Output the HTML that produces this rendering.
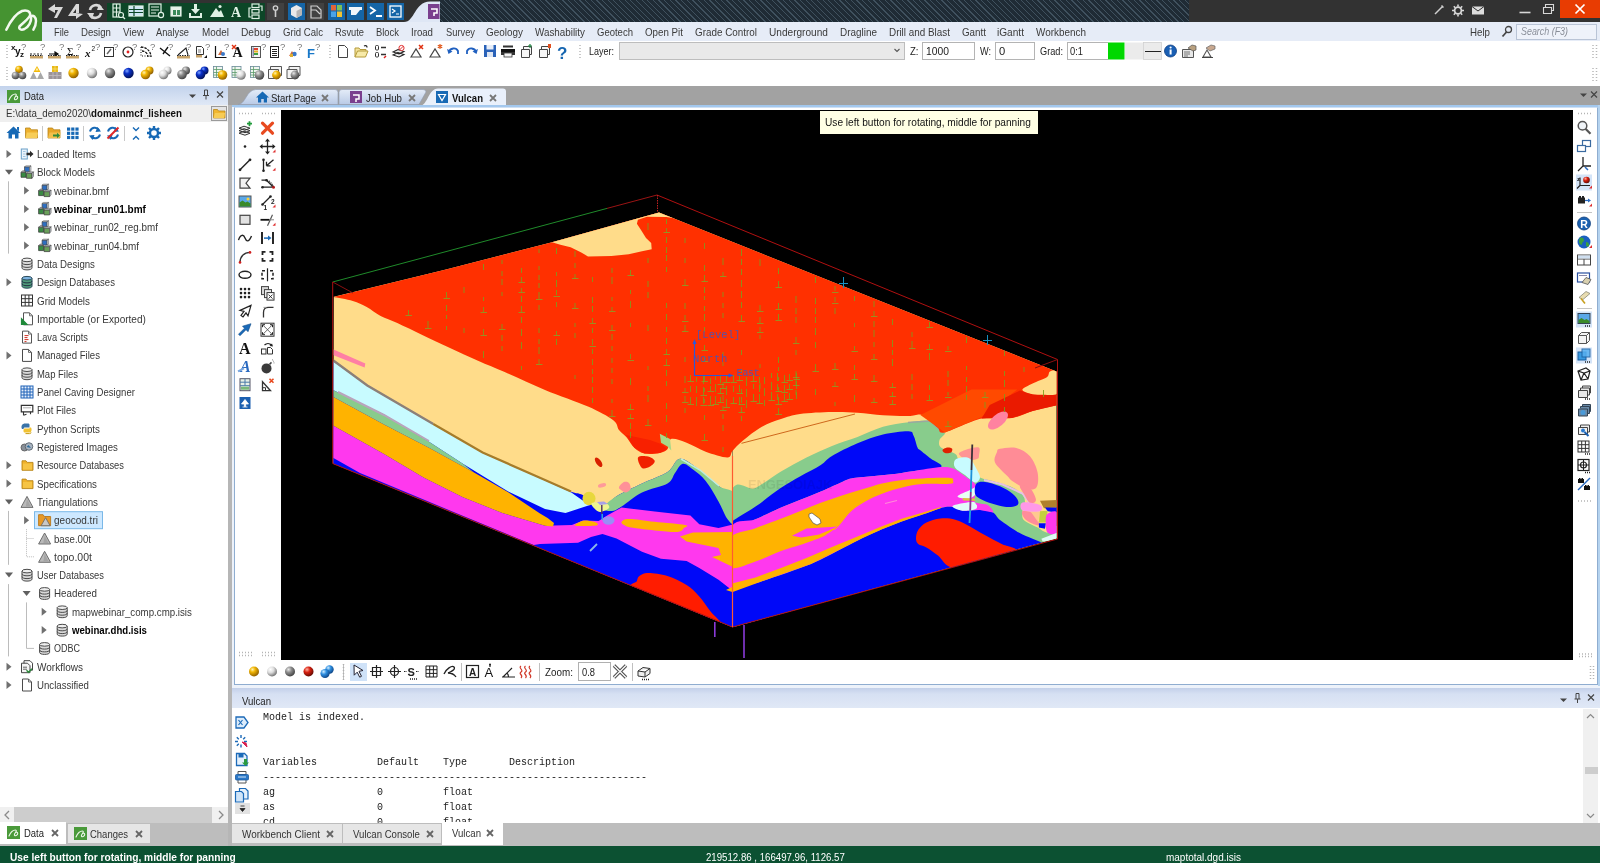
<!DOCTYPE html>
<html lang="en"><head><meta charset="utf-8"><title>Vulcan Workbench</title>
<style>
*{box-sizing:border-box;margin:0;padding:0}
html,body{width:1600px;height:863px;overflow:hidden;background:#fff}
body{position:relative;will-change:transform;font-family:"Liberation Sans",sans-serif;font-size:10.5px;letter-spacing:-0.3px;color:#222}
.a{position:absolute}
.t{position:absolute;white-space:nowrap;line-height:14px;height:14px;transform-origin:0 50%}
.b{font-weight:bold;color:#000;letter-spacing:-0.45px}
svg{position:absolute;overflow:visible}
#title{left:0;top:0;width:1600px;height:22px;background:#323232}
#hatch{left:439px;top:0;width:750px;height:22.500px;background:#1f2b35 repeating-linear-gradient(45deg,rgba(90,112,128,0) 0,rgba(90,112,128,0) 3.1px,rgba(90,112,128,.55) 3.1px,rgba(90,112,128,.55) 4px)}
#logo{left:0;top:0;width:42px;height:41px;background:#459331}
#menu{left:0;top:22px;width:1600px;height:19px;background:#e6ecf7}
#menu .t{top:3px;font-size:10.5px;color:#333}
#tb{left:0;top:41px;width:1600px;height:45px;background:#fff}
#dock{left:0;top:86px;width:1600px;height:762px;background:#a2a2a2}
#status{left:0;top:846px;width:1600px;height:17px;background:#0c5132;color:#fff}
#status .t{top:1px;color:#fff;font-size:10.5px}
.inp{position:absolute;top:42px;height:18px;border:1px solid #b4b4b4;background:#fff;font-size:10.5px;line-height:16px;padding-left:3px;color:#222}
</style></head><body>

<div class="a" id="title"></div><div class="a" id="hatch"></div>
<div class="a" id="menu"></div>
<div class="a" id="logo"></div>
<svg style="left:0;top:0" width="42" height="41" viewBox="0 0 42 41"><path d="M6.300 29.700C10 22 15 14 22 11C26 9.500 30 11 30.200 14.500C30 18 24 22 19.500 26.500C18.500 29 21 30.500 24.500 29C28.500 27 31.500 22 31.200 16.500C33 14.500 36 17 36 21C36 24.500 35 27 33.400 29.700" fill="none" stroke="#f2f9ee" stroke-width="2.500" stroke-linecap="round"/></svg>
<svg style="left:0;top:0" width="460" height="22" viewBox="0 0 460 22">
<g fill="#d8d8d8" stroke="none">
<path d="M48 9 L55 4 L55 7 L63 7 L57 18 L54 18 L58 10 L55 10 L55 13 Z"/>
<path d="M83 14 L76 19 L76 16 L68 16 L76 4 L79 4 L79 13 L76 13 L76 9 L73 13 L76 13 Z"/>
</g>
<g fill="none" stroke="#d8d8d8" stroke-width="2.6"><path d="M90 10 A6 6 0 0 1 101 8"/><path d="M101 13 A6 6 0 0 1 90 15"/></g>
<path d="M99 4 L104 10 L97 10Z M92 19 L87 13 L94 13Z" fill="#d8d8d8"/>
<rect x="107" y="3" width="158" height="18" fill="#0c4627"/>
<g fill="none" stroke="#dff0e4" stroke-width="1.2">
<rect x="113" y="4" width="7" height="13"/><path d="M116.500 4V17M113 8h7M113 12h7"/><circle cx="121" cy="15" r="2.5" fill="#0c4627"/><path d="M123 17l2 2"/>
<rect x="129" y="6" width="14" height="10" fill="#cfe6f5"/><path d="M129 9.500h14M129 12.500h14M134 6v10" stroke="#0c4627"/>
<rect x="149" y="4" width="12" height="12"/><path d="M151 7h8M151 10h8M151 13h5"/><circle cx="161" cy="15" r="2.600" fill="#0c4627"/>
<rect x="171" y="7" width="10" height="9" fill="#e8f2ea"/><rect x="173" y="10" width="3" height="5" fill="#3a8a5a" stroke="none"/><rect x="177" y="10" width="3" height="5" fill="#3a8a5a" stroke="none"/>
</g>
<path d="M194 4h3v5h3l-4.500 5l-4.500 -5h3z M189 13h2v3h9v-3h2v5h-13z" fill="#dff0e4"/>
<path d="M210 17l6-9l3 4l2-2l3 7z" fill="#dff0e4"/><circle cx="220" cy="6.500" r="1.600" fill="#dff0e4"/>
<text x="231" y="17" font-family="Liberation Serif,serif" font-weight="bold" font-size="14" fill="#dff0e4">A</text>
<g fill="none" stroke="#dff0e4" stroke-width="1.200"><rect x="252" y="4" width="7" height="3.500"/><rect x="252" y="9.500" width="7" height="3.500"/><rect x="252" y="15" width="7" height="3.500"/><path d="M251 8h-2v9h2M260 6h2v5"/></g>
<rect x="267" y="3" width="17" height="17" fill="#414141"/><circle cx="275.500" cy="8" r="2.200" fill="none" stroke="#d0d0d0" stroke-width="1.300"/><path d="M275.500 10v7" stroke="#d0d0d0" stroke-width="1.600"/>
<rect x="288" y="3" width="17" height="17" fill="#1565a6"/><path d="M291 8l5.500-3l5.500 3v7l-5.500 3l-5.500-3z" fill="#e9e9e9"/><path d="M296.500 11v7l5.500-3v-7z" fill="#b5b5b5"/>
<rect x="307" y="3" width="17" height="17" fill="#414141"/><path d="M311 6h6l4 4v8h-10z M311 10h5l4 4" fill="none" stroke="#cfcfcf" stroke-width="1.200"/>
<rect x="328" y="3" width="17" height="17" fill="#1565a6"/><rect x="331" y="5" width="5" height="5.500" fill="#e0653a"/><rect x="337" y="5" width="5" height="5.500" fill="#7cc15a"/><rect x="331" y="11.500" width="5" height="5.500" fill="#4aa3e8"/><rect x="337" y="11.500" width="5" height="5.500" fill="#f1c232"/>
<rect x="347" y="3" width="17" height="17" fill="#1565a6"/><path d="M349 7h13v3h-2l-4 5h-5v-5h-2z" fill="#f2f6fa"/>
<rect x="367" y="3" width="17" height="17" fill="#1565a6"/><path d="M370 7l5 3.500l-5 3.500M376 16h6" fill="none" stroke="#fff" stroke-width="1.800"/>
<rect x="387" y="3" width="17" height="17" fill="#1565a6"/><rect x="390" y="6" width="11" height="11" fill="none" stroke="#fff" stroke-width="1.300"/><path d="M392 9l3 2l-3 2M396 14h3" fill="none" stroke="#fff" stroke-width="1.200"/>
<path d="M404 22 C415 22 414 2 430 1.500 L440 1.500 L440 22 Z" fill="#dfe7f5"/><rect x="428" y="4" width="11.500" height="15" fill="#7a3f8e"/><path d="M431 9h6v4h-3v3" fill="none" stroke="#fff" stroke-width="1.600"/>
</svg>
<div class="a" style="left:1560px;top:0;width:40px;height:18px;background:#e83c02"></div>
<svg style="left:1430px;top:0" width="170" height="22" viewBox="1430 0 170 22"><g stroke="#fff" fill="none"><path d="M1575.500 4.500l9 9M1584.500 4.500l-9 9" stroke-width="1.700"/><path d="M1519.500 12.500h11" stroke="#d8d8d8" stroke-width="1.600"/><path d="M1543.500 7.500h8v6h-8zM1545.500 7v-2.500h8v6h-2" stroke="#d8d8d8" stroke-width="1.100"/><path d="M1435 14l8-8M1441.500 5.500l2 2" stroke="#cfcfcf" stroke-width="1.500"/><circle cx="1458" cy="10.500" r="3.400" stroke="#d8d8d8" stroke-width="1.800"/><path d="M1458 4.500v2M1458 14.500v2M1452 10.500h2M1462 10.500h2M1453.800 6.300l1.400 1.400M1460.800 13.300l1.400 1.400M1453.800 14.700l1.400-1.400M1460.800 7.700l1.400-1.400" stroke="#d8d8d8" stroke-width="1.600"/></g><rect x="1472" y="6.500" width="12" height="8" fill="#dcdcdc"/><path d="M1472 6.500l6 4.500l6-4.500" fill="none" stroke="#2c2c2c" stroke-width="1"/></svg>
<div class="t" style="left:54px;top:25px;font-size:11.2px;letter-spacing:0;transform:scaleX(0.8312);color:#3a3a3a;">File</div>
<div class="t" style="left:81px;top:25px;font-size:11.2px;letter-spacing:0;transform:scaleX(0.8605);color:#3a3a3a;">Design</div>
<div class="t" style="left:123px;top:25px;font-size:11.2px;letter-spacing:0;transform:scaleX(0.8723);color:#3a3a3a;">View</div>
<div class="t" style="left:156px;top:25px;font-size:11.2px;letter-spacing:0;transform:scaleX(0.8282);color:#3a3a3a;">Analyse</div>
<div class="t" style="left:202px;top:25px;font-size:11.2px;letter-spacing:0;transform:scaleX(0.8852);color:#3a3a3a;">Model</div>
<div class="t" style="left:241px;top:25px;font-size:11.2px;letter-spacing:0;transform:scaleX(0.9090);color:#3a3a3a;">Debug</div>
<div class="t" style="left:283px;top:25px;font-size:11.2px;letter-spacing:0;transform:scaleX(0.8570);color:#3a3a3a;">Grid Calc</div>
<div class="t" style="left:335px;top:25px;font-size:11.2px;letter-spacing:0;transform:scaleX(0.8320);color:#3a3a3a;">Rsvute</div>
<div class="t" style="left:376px;top:25px;font-size:11.2px;letter-spacing:0;transform:scaleX(0.8398);color:#3a3a3a;">Block</div>
<div class="t" style="left:411px;top:25px;font-size:11.2px;letter-spacing:0;transform:scaleX(0.8619);color:#3a3a3a;">Iroad</div>
<div class="t" style="left:446px;top:25px;font-size:11.2px;letter-spacing:0;transform:scaleX(0.8320);color:#3a3a3a;">Survey</div>
<div class="t" style="left:486px;top:25px;font-size:11.2px;letter-spacing:0;transform:scaleX(0.8870);color:#3a3a3a;">Geology</div>
<div class="t" style="left:535px;top:25px;font-size:11.2px;letter-spacing:0;transform:scaleX(0.8796);color:#3a3a3a;">Washability</div>
<div class="t" style="left:597px;top:25px;font-size:11.2px;letter-spacing:0;transform:scaleX(0.8503);color:#3a3a3a;">Geotech</div>
<div class="t" style="left:645px;top:25px;font-size:11.2px;letter-spacing:0;transform:scaleX(0.8720);color:#3a3a3a;">Open Pit</div>
<div class="t" style="left:695px;top:25px;font-size:11.2px;letter-spacing:0;transform:scaleX(0.8814);color:#3a3a3a;">Grade Control</div>
<div class="t" style="left:769px;top:25px;font-size:11.2px;letter-spacing:0;transform:scaleX(0.9025);color:#3a3a3a;">Underground</div>
<div class="t" style="left:840px;top:25px;font-size:11.2px;letter-spacing:0;transform:scaleX(0.8871);color:#3a3a3a;">Dragline</div>
<div class="t" style="left:889px;top:25px;font-size:11.2px;letter-spacing:0;transform:scaleX(0.8829);color:#3a3a3a;">Drill and Blast</div>
<div class="t" style="left:962px;top:25px;font-size:11.2px;letter-spacing:0;transform:scaleX(0.8762);color:#3a3a3a;">Gantt</div>
<div class="t" style="left:997px;top:25px;font-size:11.2px;letter-spacing:0;transform:scaleX(0.9036);color:#3a3a3a;">iGantt</div>
<div class="t" style="left:1036px;top:25px;font-size:11.2px;letter-spacing:0;transform:scaleX(0.8859);color:#3a3a3a;">Workbench</div>
<div class="t" style="left:1470px;top:25px;font-size:11.2px;letter-spacing:0;transform:scaleX(0.8683);color:#3a3a3a;">Help</div>
<div class="a" style="left:1516px;top:24px;width:81px;height:16px;border:1px solid #b9c4d6;background:#eef2fa"></div>
<div class="t" style="left:1521px;top:25px;font-size:10px;letter-spacing:0;transform:scaleX(0.8903);color:#8a8f99;font-style:italic;">Search (F3)</div>
<svg style="left:1500px;top:24px" width="14" height="16" viewBox="0 0 14 16"><circle cx="8.500" cy="5.500" r="3" fill="none" stroke="#444" stroke-width="1.300"/><path d="M6.500 8l-4 4.500" stroke="#444" stroke-width="1.800"/></svg>
<div class="a" id="tb"></div>
<svg style="left:0;top:0" width="1600" height="90" viewBox="0 0 1600 90">
<defs>
<radialGradient id="gGold" cx="35%" cy="30%" r="75%"><stop offset="0" stop-color="#fff2b0"/><stop offset=".35" stop-color="#f2b705"/><stop offset="1" stop-color="#8a5a00"/></radialGradient>
<radialGradient id="gWhite" cx="35%" cy="30%" r="75%"><stop offset="0" stop-color="#ffffff"/><stop offset=".45" stop-color="#dcdcdc"/><stop offset="1" stop-color="#6a6a6a"/></radialGradient>
<radialGradient id="gGray" cx="35%" cy="30%" r="75%"><stop offset="0" stop-color="#e8e8e8"/><stop offset=".4" stop-color="#8e8e8e"/><stop offset="1" stop-color="#3c3c3c"/></radialGradient>
<radialGradient id="gBlue" cx="35%" cy="30%" r="75%"><stop offset="0" stop-color="#7fa4ff"/><stop offset=".35" stop-color="#0a30c8"/><stop offset="1" stop-color="#02104e"/></radialGradient>
<radialGradient id="gRed" cx="35%" cy="30%" r="75%"><stop offset="0" stop-color="#ffb0a0"/><stop offset=".4" stop-color="#d82010"/><stop offset="1" stop-color="#5a0800"/></radialGradient>
<radialGradient id="gSky" cx="35%" cy="30%" r="75%"><stop offset="0" stop-color="#d0ecff"/><stop offset=".4" stop-color="#2f8fe0"/><stop offset="1" stop-color="#0a3f80"/></radialGradient>
</defs>
<path d="M7 45V58" stroke="#b8b8b8" stroke-width="1.500" stroke-dasharray="1 2"/>
<path d="M7 67V80" stroke="#b8b8b8" stroke-width="1.500" stroke-dasharray="1 2"/>
<path d="M330 45V58" stroke="#b8b8b8" stroke-width="1.500" stroke-dasharray="1 2"/>
<path d="M580 45V58" stroke="#b8b8b8" stroke-width="1.500" stroke-dasharray="1 2"/>
<path d="M1593 45V58" stroke="#b8b8b8" stroke-width="1.500" stroke-dasharray="1 2"/>
<path d="M1596.5 45V58" stroke="#b8b8b8" stroke-width="1.500" stroke-dasharray="1 2"/>
<path d="M1593 68V82" stroke="#b8b8b8" stroke-width="1.500" stroke-dasharray="1 2"/>
<path d="M1596.5 68V82" stroke="#b8b8b8" stroke-width="1.500" stroke-dasharray="1 2"/>
<text x="11" y="50" font-size="8" font-weight="bold" fill="#111" font-family="Liberation Sans,sans-serif">x</text><text x="15" y="55" font-size="10" font-weight="bold" fill="#111" font-family="Liberation Sans,sans-serif">y</text><text x="20" y="57" font-size="8" font-weight="bold" fill="#111" font-family="Liberation Sans,sans-serif">z</text><text x="21" y="50" font-size="9.500" fill="#7a7a7a" font-family="Liberation Sans,sans-serif">?</text>
<path d="M30 54h12" stroke="#222" stroke-width="1.200" stroke-dasharray="2 1.500"/><rect x="30" y="56" width="13" height="2.500" fill="#c8a46a"/><path d="M30 55.5h13" stroke="#222" stroke-width="1" stroke-dasharray="1.500 1"/><text x="40" y="50" font-size="9.500" fill="#7a7a7a" font-family="Liberation Sans,sans-serif">?</text>
<path d="M49 54h8M55 52l3 2l-3 2z" stroke="#111" stroke-width="1.200" fill="#111"/><rect x="48" y="56" width="13" height="2.500" fill="#c8a46a"/><path d="M48 55.5h13" stroke="#222" stroke-width="1" stroke-dasharray="1.500 1"/><text x="59" y="50" font-size="9.500" fill="#7a7a7a" font-family="Liberation Sans,sans-serif">?</text>
<text x="67" y="55" font-size="11" fill="#111" font-family="Liberation Serif,serif">Σ</text><rect x="66" y="56" width="13" height="2.500" fill="#c8a46a"/><path d="M66 55.5h13" stroke="#222" stroke-width="1" stroke-dasharray="1.500 1"/><text x="76" y="50" font-size="9.500" fill="#7a7a7a" font-family="Liberation Sans,sans-serif">?</text>
<text x="85" y="57" font-size="11" font-weight="bold" font-style="italic" fill="#111" font-family="Liberation Serif,serif">x</text><text x="91.500" y="51" font-size="6.500" fill="#111" font-family="Liberation Sans,sans-serif">2</text><text x="95" y="50" font-size="9.500" fill="#7a7a7a" font-family="Liberation Sans,sans-serif">?</text>
<rect x="104.500" y="47.500" width="9" height="9" fill="none" stroke="#333" stroke-width="1"/><path d="M107 54l4-5" stroke="#666" stroke-width="1.500"/><text x="113" y="50" font-size="9.500" fill="#7a7a7a" font-family="Liberation Sans,sans-serif">?</text>
<circle cx="128" cy="52" r="5" fill="none" stroke="#222" stroke-width="1.200"/><circle cx="128" cy="52" r="1.400" fill="#e02020"/><text x="132" y="50" font-size="9.500" fill="#7a7a7a" font-family="Liberation Sans,sans-serif">?</text>
<path d="M141 47 A10 10 0 0 1 151 57M142 51a6 6 0 0 1 6 6" fill="none" stroke="#111" stroke-width="1.300" stroke-dasharray="2.500 1"/><path d="M141 47v9h10" fill="none" stroke="#111" stroke-width="1" stroke-dasharray="1 1.500"/><text x="150" y="50" font-size="9.500" fill="#7a7a7a" font-family="Liberation Sans,sans-serif">?</text>
<path d="M160 48l10 8M168 47l-5 7" stroke="#111" stroke-width="1.300"/><text x="168" y="50" font-size="9.500" fill="#7a7a7a" font-family="Liberation Sans,sans-serif">?</text>
<path d="M178 55l8-7l2 7" fill="none" stroke="#222" stroke-width="1.100"/><rect x="177" y="56" width="13" height="2.500" fill="#c8a46a"/><path d="M177 55.5h13" stroke="#222" stroke-width="1" stroke-dasharray="1.500 1"/><text x="186" y="50" font-size="9.500" fill="#7a7a7a" font-family="Liberation Sans,sans-serif">?</text>
<path d="M196.500 46.500h5l2 2v6h-7z" fill="#fff" stroke="#333" stroke-width="1"/><path d="M198 50h3M198 52h3" stroke="#555" stroke-width=".8"/><rect x="196" y="55" width="6" height="2.500" fill="#c8a46a"/><path d="M204 58l3-3v3z" fill="#111"/><text x="205" y="50" font-size="9.500" fill="#7a7a7a" font-family="Liberation Sans,sans-serif">?</text>
<path d="M215.500 46v11.500h11" fill="none" stroke="#111" stroke-width="1.200"/><path d="M218 55l3-5l3 5z" fill="#d26a3a"/><circle cx="223" cy="54" r="2" fill="#3a78c8"/><text x="224" y="50" font-size="9.500" fill="#7a7a7a" font-family="Liberation Sans,sans-serif">?</text>
<text x="232.500" y="57" font-size="14" font-weight="bold" fill="#111" font-family="Liberation Serif,serif">A</text><path d="M232 45l4 4M236 45l-4 4" stroke="#e03010" stroke-width="1.400"/>
<rect x="251.500" y="46.500" width="9" height="11" fill="#f4f4f4" stroke="#555" stroke-width="1"/><rect x="254" y="48" width="4" height="2" fill="#e04030"/><rect x="254" y="50.500" width="4" height="2" fill="#e8b020"/><rect x="254" y="53" width="4" height="2" fill="#40a040"/><rect x="252.500" y="47.500" width="1.500" height="9" fill="#88a"/><text x="261" y="50" font-size="9.500" fill="#7a7a7a" font-family="Liberation Sans,sans-serif">?</text>
<rect x="270.500" y="46.500" width="8" height="11" fill="#fff" stroke="#222" stroke-width="1"/><path d="M272 49.500h5M272 51.500h5M272 53.500h5M272 55.500h5" stroke="#222" stroke-width="1"/><text x="280" y="50" font-size="9.500" fill="#7a7a7a" font-family="Liberation Sans,sans-serif">?</text>
<path d="M289 56l3-5l3 5z" fill="#d26a3a"/><circle cx="294.500" cy="54" r="2.200" fill="#3a78c8"/><rect x="290" y="54" width="3" height="3" fill="#e0b030"/><text x="297" y="50" font-size="9.500" fill="#7a7a7a" font-family="Liberation Sans,sans-serif">?</text>
<text x="307" y="58" font-size="13" font-weight="bold" fill="#1878c8" font-family="Liberation Sans,sans-serif">F</text><text x="315" y="50" font-size="9.500" fill="#7a7a7a" font-family="Liberation Sans,sans-serif">?</text>
<path d="M338.500 45.500h6l3 3v9h-9z" fill="#fff" stroke="#444" stroke-width="1"/>
<path d="M355 57v-9h4l1 1.500h6v2" fill="#f4e39a" stroke="#b49a3a" stroke-width="1"/><path d="M355 57l2.500-6h10.500l-2.500 6z" fill="#f7eaa8" stroke="#b49a3a" stroke-width="1"/><path d="M364 46c2-1 3 0 3 1.500" fill="none" stroke="#222" stroke-width="1.200"/>
<rect x="375.500" y="45.500" width="3" height="4.500" rx="1" fill="none" stroke="#333"/><rect x="375.500" y="52.500" width="3" height="4.500" rx="1" fill="none" stroke="#333"/><path d="M381 47.500h5M381 54.500h5" stroke="#333" stroke-width="1.300"/><path d="M384 58l2-2" stroke="#e02020" stroke-width="1.500"/>
<path d="M393 52l5-2.500l6 2l-5 2.500zM393 55l5-2.500l6 2l-5 2.500z" fill="#eee" stroke="#222" stroke-width="1.100"/><circle cx="401.500" cy="48" r="2.600" fill="#fff" stroke="#e03030" stroke-width="1"/><path d="M399.700 49.800l3.600-3.600" stroke="#e03030"/>
<path d="M411 57l5-8l5 8z" fill="none" stroke="#444" stroke-width="1.200"/><path d="M419 45l4 4M423 45l-4 4" stroke="#e03010" stroke-width="1.500"/>
<path d="M430 57l5-8l5 8z" fill="none" stroke="#444" stroke-width="1.200"/><path d="M440 44v5M437.800 45.200l4.400 2.600M437.800 47.800l4.400-2.600" stroke="#e05010" stroke-width="1.100"/>
<path d="M449 52c1-4 7-5 9-1v3" fill="none" stroke="#2060c0" stroke-width="1.800"/><path d="M447 49l1.500 5l4-2.500z" fill="#2060c0"/>
<path d="M476 52c-1-4-7-5-9-1v3" fill="none" stroke="#2060c0" stroke-width="1.800"/><path d="M478 49l-1.500 5l-4-2.500z" fill="#2060c0"/>
<rect x="484" y="45" width="12" height="12" fill="#2a62b8"/><rect x="486.500" y="45" width="7" height="4.500" fill="#e8eef8"/><rect x="487" y="52" width="6" height="5" fill="#dfe6f2"/>
<path d="M503 47.500h10v-2h-10zM501 49h14v6h-14z" fill="#333"/><rect x="504" y="53" width="8" height="4" fill="#f4f4f4" stroke="#333" stroke-width=".8"/><rect x="501" y="49" width="14" height="3" fill="#111"/>
<path d="M521.500 49.500h8v8h-8zM523.500 49v-2.500h8v8h-2" fill="#f6f6f6" stroke="#444" stroke-width="1"/><path d="M530 44v4M528 46h4" stroke="#208040" stroke-width="1.200"/>
<path d="M539.500 49.500h8v8h-8zM541.500 49v-2.500h8v8h-2" fill="#f6f6f6" stroke="#444" stroke-width="1"/><rect x="548" y="44" width="3" height="4" fill="#e05020"/>
<text x="557" y="58.500" font-size="17" font-weight="bold" fill="#1565b0" font-family="Liberation Sans,sans-serif">?</text>
<rect x="619.500" y="42.500" width="285" height="17" fill="#e9e9e9" stroke="#bdbdbd"/><path d="M894.500 49l2.500 2.500l2.500-2.500" fill="none" stroke="#555" stroke-width="1.100"/>
<rect x="1107" y="42.500" width="17.500" height="17" fill="#00d800"/><rect x="1125" y="42.500" width="18" height="17" fill="#ebebeb"/><rect x="1143.500" y="42.500" width="18" height="17" fill="#ebebeb" stroke="#d0d0d0" stroke-width=".8"/><path d="M1145 51.500h16" stroke="#222" stroke-width="1"/>
<circle cx="1170.500" cy="51" r="6" fill="#1a5fb4"/><circle cx="1170.500" cy="51" r="6" fill="none" stroke="#0c3c80" stroke-width=".8"/><rect x="1169.600" y="49.500" width="2" height="5" fill="#fff"/><circle cx="1170.600" cy="47.500" r="1.100" fill="#fff"/>
<path d="M1182.500 49.500h11v8h-11z" fill="#e8e8e8" stroke="#555" stroke-width="1"/><path d="M1184 52h6M1184 54h6M1184 56h4" stroke="#555" stroke-width=".8"/><path d="M1188 48l4-3l4 1v4l-3 1z" fill="#b8a080" stroke="#555" stroke-width=".7"/>
<path d="M1203 57l4-7l4 7z" fill="none" stroke="#555" stroke-width="1.100"/><path d="M1206 48l5-3l4 1v3l-5 2z" fill="#c8a890" stroke="#666" stroke-width=".7"/><path d="M1202 57.500h11" stroke="#444" stroke-width="1"/>
<circle cx="19" cy="69.5" r="3.8" fill="url(#gGold)"/><circle cx="15.5" cy="75.5" r="3.8" fill="url(#gGray)"/><circle cx="22.5" cy="75.5" r="3.8" fill="url(#gGray)"/>
<path d="M37 66l3.500 6h-7z" fill="#f2b705"/><path d="M33.500 72l3.500 7h-7zM40.500 72l3.500 7h-7z" fill="#a8a8a8"/><path d="M37 67.500l1.500 3h-3z" fill="#fff2b0"/>
<rect x="52" y="66" width="6" height="6" fill="#e8b818"/><path d="M52 69h6M55 66v6" stroke="#f8e070" stroke-width=".8"/><rect x="48.500" y="72" width="13" height="7" fill="#9a9498"/><path d="M48.500 75.500h13M53 72v7M57 72v7" stroke="#c4bcc0" stroke-width=".8"/>
<circle cx="73.5" cy="73" r="5.2" fill="url(#gGold)"/>
<circle cx="92" cy="73" r="5.2" fill="url(#gWhite)"/>
<circle cx="110" cy="73" r="5.2" fill="url(#gGray)"/>
<circle cx="128.5" cy="73" r="5.2" fill="url(#gBlue)"/>
<circle cx="149.5" cy="70.5" r="4" fill="url(#gGold)"/><circle cx="145.5" cy="74.5" r="4.8" fill="url(#gGold)"/>
<circle cx="167.5" cy="70.5" r="4" fill="url(#gWhite)"/><circle cx="163.5" cy="74.5" r="4.8" fill="url(#gWhite)"/>
<circle cx="186.0" cy="70.5" r="4" fill="url(#gGray)"/><circle cx="182.0" cy="74.5" r="4.8" fill="url(#gGray)"/>
<circle cx="204.5" cy="70.5" r="4" fill="url(#gBlue)"/><circle cx="200.5" cy="74.5" r="4.8" fill="url(#gBlue)"/>
<rect x="213.5" y="66.500" width="9" height="11" fill="#f0f6f0" stroke="#6a8a9a" stroke-width=".8"/><path d="M213.5 69.500h9M213.5 72.500h9M213.5 75h9M216.5 66.500v11" stroke="#5a9a6a" stroke-width=".8"/><circle cx="222.5" cy="75" r="4.8" fill="url(#gGold)"/>
<rect x="232.0" y="66.500" width="9" height="11" fill="#f0f6f0" stroke="#6a8a9a" stroke-width=".8"/><path d="M232.0 69.500h9M232.0 72.500h9M232.0 75h9M235.0 66.500v11" stroke="#5a9a6a" stroke-width=".8"/><circle cx="241" cy="75" r="4.8" fill="url(#gWhite)"/>
<rect x="250.5" y="66.500" width="9" height="11" fill="#f0f6f0" stroke="#6a8a9a" stroke-width=".8"/><path d="M250.5 69.500h9M250.5 72.500h9M250.5 75h9M253.5 66.500v11" stroke="#5a9a6a" stroke-width=".8"/><circle cx="259.5" cy="75" r="4.8" fill="url(#gGray)"/>
<path d="M268.5 69.500h10v9h-10zM270.5 69v-2.500h11v9h-3" fill="#f4f4f4" stroke="#555" stroke-width="1"/><circle cx="276.5" cy="75" r="4.4" fill="url(#gGold)"/>
<path d="M287.0 69.500h10v9h-10zM289.0 69v-2.500h11v9h-3" fill="#f4f4f4" stroke="#555" stroke-width="1"/><circle cx="295" cy="75" r="4.4" fill="url(#gGray)"/>
</svg>
<div class="inp" style="left:922px;width:53px">&nbsp;</div><div class="inp" style="left:995px;width:40px">&nbsp;</div><div class="inp" style="left:1066.500px;width:41px;border-right:none">&nbsp;</div>
<div class="t" style="left:589px;top:44px;font-size:11.2px;letter-spacing:0;transform:scaleX(0.8032);color:#222;">Layer:</div>
<div class="t" style="left:910px;top:44px;font-size:11.2px;letter-spacing:0;transform:scaleX(0.8541);color:#222;">Z:</div>
<div class="t" style="left:926px;top:44px;font-size:11.2px;letter-spacing:0;transform:scaleX(0.9232);color:#222;">1000</div>
<div class="t" style="left:980px;top:44px;font-size:11.2px;letter-spacing:0;transform:scaleX(0.8160);color:#222;">W:</div>
<div class="t" style="left:999px;top:44px;font-size:11.2px;color:#222;">0</div>
<div class="t" style="left:1040px;top:44px;font-size:11.2px;letter-spacing:0;transform:scaleX(0.8212);color:#222;">Grad:</div>
<div class="t" style="left:1070px;top:44px;font-size:11.2px;letter-spacing:0;transform:scaleX(0.8350);color:#222;">0:1</div>
<div class="a" id="dock"></div><div class="a" style="left:0;top:823px;width:1600px;height:23px;background:#bdbdbd"></div>
<div class="a" style="left:0;top:86px;width:228px;height:19px;background:linear-gradient(#c3d3ec,#dfe8f6)"></div>
<div class="a" style="left:0;top:105px;width:228px;height:17px;background:#efefef"></div>
<div class="a" style="left:0;top:122px;width:228px;height:685px;background:#fff"></div>
<div class="a" style="left:0;top:807px;width:228px;height:16px;background:#f0f0f0"></div><div class="a" style="left:14px;top:807px;width:198px;height:16px;background:#cdcdcd"></div>
<svg style="left:0;top:807px" width="228" height="16"><path d="M9 4l-4 4l4 4M219 4l4 4l-4 4" fill="none" stroke="#8a8a8a" stroke-width="1.300"/></svg>
<svg style="left:7px;top:90px" width="13" height="13" viewBox="0 0 13 13"><rect width="13" height="13" fill="#4a9a3a"/><path d="M2 10c1.500-3.500 4-6 6.500-6c1.200 0 .8 1.500 0 2.500c-1 1.300-1.500 2.500-.8 3c1 .6 3-.4 3-2c0-1.300-1.500-1.600-2.400-.8" fill="none" stroke="#f0f8ec" stroke-width="1.100" stroke-linecap="round"/></svg>
<div class="t" style="left:24px;top:89px;font-size:11.2px;letter-spacing:0;transform:scaleX(0.8454);color:#222;">Data</div>
<svg style="left:185px;top:88px" width="44" height="14" viewBox="185 88 44 14"><path d="M189 94.500h7l-3.500 3.500z" fill="#444"/><path d="M204.500 90v5.500M207.500 90v5.500M204.500 90h3M203 95.500h6M206 95.500v4" fill="none" stroke="#444" stroke-width="1"/><path d="M217 91.500l6 6M223 91.500l-6 6" stroke="#444" stroke-width="1.200"/></svg>
<div class="t" style="left:6px;top:106px;font-size:11.2px;letter-spacing:0;transform:scaleX(0.8695);color:#333;">E:\data_demo2020\</div>
<div class="t" style="left:91px;top:106px;font-size:11.2px;letter-spacing:0;transform:scaleX(0.8704);font-weight:bold;color:#111;">domainmcf_lisheen</div>
<div class="a" style="left:211px;top:106px;width:16px;height:15px;border:1px solid #9a9a9a;background:#e4e4e4"></div><svg style="left:213px;top:108px" width="13" height="11"><path d="M.5 10V1.500h4l1 1.500h6.500v7z" fill="#f0b630" stroke="#b8861a" stroke-width=".8"/><path d="M.5 10l1.500-5h10l-1 5z" fill="#f7cc55"/></svg>
<svg style="left:0;top:122px" width="228" height="22" viewBox="0 122 228 22">
<path d="M6.500 133l7-6.500l7 6.500h-2v5.500h-3.500v-4h-3v4h-3.500v-5.500z" fill="#1769b5"/><path d="M17 127v2.500l2 1.800v-4.300z" fill="#1769b5"/>
<path d="M25.500 138v-10h4.500l1.200 1.800h6.300v8.200z" fill="#eeb12e" stroke="#b9851a" stroke-width=".8"/><path d="M25.500 138l1.500-5.500h11l-1 5.500z" fill="#f7cd58"/>
<path d="M42.500 126v15M83.500 126v15M124.500 126v15" stroke="#c8c8c8" stroke-width="1"/>
<path d="M48 138v-10h4.500l1.200 1.800h6.300v8.200z" fill="#e8a628" stroke="#b9851a" stroke-width=".8"/><path d="M48 138l1.500-5.500h11l-1 5.500z" fill="#f3c04a"/><path d="M53 134.500h4v-1.800l3 2.800l-3 2.800v-1.800h-4z" fill="#2e8a3a"/>
<rect x="67.0" y="127.5" width="3.200" height="3.200" fill="#1769b5"/>
<rect x="67.0" y="131.7" width="3.200" height="3.200" fill="#1769b5"/>
<rect x="67.0" y="135.9" width="3.200" height="3.200" fill="#1769b5"/>
<rect x="71.2" y="127.5" width="3.200" height="3.200" fill="#1769b5"/>
<rect x="71.2" y="131.7" width="3.200" height="3.200" fill="#1769b5"/>
<rect x="71.2" y="135.9" width="3.200" height="3.200" fill="#1769b5"/>
<rect x="75.4" y="127.5" width="3.200" height="3.200" fill="#1769b5"/>
<rect x="75.4" y="131.7" width="3.200" height="3.200" fill="#1769b5"/>
<rect x="75.4" y="135.9" width="3.200" height="3.200" fill="#1769b5"/>
<g fill="none" stroke="#1769b5" stroke-width="2"><path d="M90 131.500a5 5 0 0 1 9-1.500M100 134.500a5 5 0 0 1-9 1.500"/></g><path d="M97.500 127l3.500 4.500l-5.500.5zM92.500 140l-3.500-4.500l5.500-.5z" fill="#1769b5"/>
<g fill="none" stroke="#1769b5" stroke-width="2"><path d="M108 131.500a5 5 0 0 1 9-1.500M118 134.500a5 5 0 0 1-9 1.500"/></g><path d="M115.500 127l3.500 4.500l-5.500.5zM110.500 140l-3.500-4.500l5.500-.5z" fill="#1769b5"/><path d="M107.500 138.500l11-11" stroke="#e02828" stroke-width="2"/>
<path d="M133 127.500l3 3l3-3M133 139.500l3-3l3 3" fill="none" stroke="#1769b5" stroke-width="1.400"/>
<circle cx="154" cy="133" r="4" fill="none" stroke="#1769b5" stroke-width="2.400"/><g stroke="#1769b5" stroke-width="2.400"><path d="M154 126v2.500M154 137.500v2.500M147 133h2.500M158.500 133h2.500M149 128l1.800 1.800M157.200 136.200l1.800 1.800M149 138l1.800-1.800M157.200 129.800l1.800-1.800"/></g>
</svg>
<div class="a" style="left:0;top:822px;width:66px;height:22px;background:#fff"></div>
<div class="a" style="left:68px;top:824px;width:82px;height:19px;background:#e6e6e6"></div>
<svg style="left:7px;top:826px" width="13" height="13" viewBox="0 0 13 13"><rect width="13" height="13" fill="#4a9a3a"/><path d="M2 10c1.500-3.500 4-6 6.500-6c1.200 0 .8 1.500 0 2.500c-1 1.300-1.500 2.500-.8 3c1 .6 3-.4 3-2c0-1.300-1.500-1.600-2.400-.8" fill="none" stroke="#f0f8ec" stroke-width="1.100" stroke-linecap="round"/></svg>
<div class="t" style="left:24px;top:826px;font-size:11.2px;letter-spacing:0;transform:scaleX(0.8454);color:#222;">Data</div>
<svg style="left:74px;top:827px" width="13" height="13" viewBox="0 0 13 13"><rect width="13" height="13" fill="#4a9a3a"/><path d="M2 10c1.500-3.500 4-6 6.500-6c1.200 0 .8 1.500 0 2.500c-1 1.300-1.500 2.500-.8 3c1 .6 3-.4 3-2c0-1.300-1.500-1.600-2.400-.8" fill="none" stroke="#f0f8ec" stroke-width="1.100" stroke-linecap="round"/></svg>
<div class="t" style="left:90px;top:827px;font-size:11.2px;letter-spacing:0;transform:scaleX(0.8477);color:#333;">Changes</div>
<svg style="left:51px;top:829px" width="8" height="8"><path d="M1 1l6 6M7 1l-6 6" stroke="#666" stroke-width="1.800"/></svg>
<svg style="left:135px;top:830px" width="8" height="8"><path d="M1 1l6 6M7 1l-6 6" stroke="#666" stroke-width="1.800"/></svg>
<svg style="left:230px;top:86px" width="290" height="22" viewBox="230 86 290 22"><defs><linearGradient id="tg" x1="0" y1="0" x2="0" y2="1"><stop offset="0" stop-color="#e4ecf8"/><stop offset="1" stop-color="#b9cae6"/></linearGradient></defs><path d="M238 104.500C246 104 246 90 256 89.500L335 89.500Q338 89.500 338 92.500L338 104.500Z" fill="url(#tg)" stroke="#8e9bb0" stroke-width=".6"/><path d="M339 104.500L339 92.500Q339 89.500 342 89.500L423 89.500Q426 89.500 426 92L419 104.500Z" fill="url(#tg)" stroke="#8e9bb0" stroke-width=".6"/><path d="M420 106C428 105 428 89 438 88.500L503 88.500Q506 88.500 506 91.500L506 106Z" fill="#e9f0fb"/><path d="M256 97.500l6.500-6l6.500 6h-2v5h-3.200v-3.500h-2.600v3.500h-3.200v-5z" fill="#1769b5"/><rect x="350" y="91" width="12" height="12" fill="#7a3f8e"/><path d="M353 95h6v4h-3v3" fill="none" stroke="#fff" stroke-width="1.500"/><rect x="436" y="91" width="12" height="12" fill="#1769b5"/><path d="M438.500 94.500h7l-3.500 6z" fill="none" stroke="#fff" stroke-width="1.200"/></svg>
<div class="t" style="left:271px;top:91px;font-size:11.2px;letter-spacing:0;transform:scaleX(0.8504);color:#222;">Start Page</div>
<svg style="left:321px;top:94px" width="8" height="8"><path d="M1 1l6 6M7 1l-6 6" stroke="#777" stroke-width="1.800"/></svg>
<div class="t" style="left:366px;top:91px;font-size:11.2px;letter-spacing:0;transform:scaleX(0.8630);color:#222;">Job Hub</div>
<svg style="left:408px;top:94px" width="8" height="8"><path d="M1 1l6 6M7 1l-6 6" stroke="#777" stroke-width="1.800"/></svg>
<div class="t" style="left:452px;top:91px;font-size:11.2px;letter-spacing:0;transform:scaleX(0.8539);font-weight:bold;color:#111;">Vulcan</div>
<svg style="left:489px;top:94px" width="8" height="8"><path d="M1 1l6 6M7 1l-6 6" stroke="#777" stroke-width="1.800"/></svg>
<svg style="left:1577px;top:88px" width="24" height="14" viewBox="1575 88 24 14"><path d="M1578 93.500h7l-3.500 3.500z" fill="#444"/><path d="M1589 91.500l6 6M1595 91.500l-6 6" stroke="#444" stroke-width="1.200"/></svg>
<div class="a" style="left:232px;top:105px;width:1368px;height:583px;background:#edf2fa"></div><div class="a" style="left:232px;top:105px;width:1368px;height:2px;background:#a3c8ee"></div><div class="a" style="left:1598px;top:105px;width:2px;height:581px;background:#b5d3ef"></div><div class="a" style="left:234px;top:107px;width:1364px;height:578px;background:#fff;border:1px solid #8fadd0;border-top:1px solid #cfe0f4"></div>
<div class="a" style="left:228px;top:105px;width:4px;height:741px;background:#b6b6b6"></div>
<div class="a" id="vp" style="left:281px;top:110px;width:1292px;height:550px;background:#000"></div>
<div class="a" style="left:232px;top:688px;width:1368px;height:20px;background:linear-gradient(#c3d0e9,#d6e0f3 30%,#e0e8f6)"></div>
<div class="a" style="left:232px;top:708px;width:1368px;height:115px;background:#fff"></div>
<div class="t" style="left:242px;top:694px;font-size:11.2px;letter-spacing:0;transform:scaleX(0.8572);color:#222;">Vulcan</div>
<svg style="left:1556px;top:692px" width="44" height="14" viewBox="1556 692 44 14"><path d="M1560 698.500h7l-3.500 3.500z" fill="#444"/><path d="M1576 693.500v5.500M1579 693.500v5.500M1576 693.500h3M1574.500 699h6M1577.500 699v4" fill="none" stroke="#444" stroke-width="1"/><path d="M1588 694.500l6 6M1594 694.500l-6 6" stroke="#444" stroke-width="1.200"/></svg>
<div class="a" style="left:1583px;top:709px;width:15px;height:114px;background:#f0f0f0"></div><div class="a" style="left:1585px;top:767px;width:13px;height:7px;background:#cdcdcd"></div>
<svg style="left:1583px;top:709px" width="15" height="114"><path d="M4 9l3.500-3.500l3.500 3.500M4 105l3.500 3.500l3.500-3.500" fill="none" stroke="#8a8a8a" stroke-width="1.200"/></svg>
<svg style="left:232px;top:709px" width="24" height="114" viewBox="232 709 24 114"><path d="M236 717h8l4 5.500l-4 5.500h-8z" fill="#dcecfb" stroke="#1c6ab8" stroke-width="1.300"/><path d="M238.500 720l4 5M242.500 720l-4 5" stroke="#1c6ab8" stroke-width="1.200"/><g stroke="#1c6ab8" stroke-width="1.400"><path d="M241 735v3M241 744.500v3M235 741.500h3M244 741.500h3M236.800 737.300l2 2M236.800 745.700l2-2M245.200 737.300l-2 2"/></g><path d="M242 742l5 5l-1-4z" fill="#d82050" stroke="#d82050" stroke-width="1"/><path d="M236.500 753.500h8l2.500 2.500v9.500h-10.500z" fill="#e4f0fb" stroke="#1c6ab8" stroke-width="1.300"/><rect x="238.500" y="754" width="5" height="3.500" fill="#1c6ab8"/><path d="M244 759v3.500h-2l3.500 3.500l3.500-3.500h-2v-3.500z" fill="#2a9a40"/><path d="M238 771.500h8v3h-8zM238 780v3h8v-3" fill="#fff" stroke="#555" stroke-width="1"/><rect x="235.500" y="774.500" width="13" height="5.500" rx="1" fill="#2a78c8" stroke="#1c5aa0" stroke-width=".8"/><path d="M238 777h8" stroke="#cfe4f8" stroke-width="1"/><path d="M239.500 788.500h6l2.500 2.500v8h-8.500z" fill="#e4f0fb" stroke="#1c6ab8" stroke-width="1.200"/><path d="M235.500 791.500h6l2 2v8.500h-8z" fill="#cfe4f8" stroke="#1c6ab8" stroke-width="1.200"/><rect x="235" y="803" width="15" height="11" fill="#e2e2e2"/><path d="M240.500 806h4M240 808.500h5l-2.500 3z" fill="#222" stroke="#222" stroke-width=".8"/></svg>
<div class="t" style="left:263px;top:711px;font-size:10px;color:#222;font-family:'Liberation Mono',monospace;letter-spacing:0;white-space:pre;">Model is indexed.</div>
<div class="t" style="left:263px;top:756px;font-size:10px;color:#222;font-family:'Liberation Mono',monospace;letter-spacing:0;white-space:pre;">Variables          Default    Type       Description</div>
<div class="t" style="left:263px;top:771px;font-size:10px;color:#222;font-family:'Liberation Mono',monospace;letter-spacing:0;white-space:pre;">----------------------------------------------------------------</div>
<div class="t" style="left:263px;top:786px;font-size:10px;color:#222;font-family:'Liberation Mono',monospace;letter-spacing:0;white-space:pre;">ag                 0          float</div>
<div class="t" style="left:263px;top:801px;font-size:10px;color:#222;font-family:'Liberation Mono',monospace;letter-spacing:0;white-space:pre;">as                 0          float</div>
<div class="a" style="left:263px;top:816px;height:7px;overflow:hidden;width:400px"><div class="t" style="left:0;top:0;font-size:10px;color:#222;font-family:'Liberation Mono',monospace;letter-spacing:0;white-space:pre;">cd                 0          float</div></div>
<div class="a" style="left:232px;top:824px;width:110px;height:19px;background:#e6e6e6"></div>
<div class="a" style="left:343px;top:824px;width:98px;height:19px;background:#e6e6e6"></div>
<div class="a" style="left:442px;top:822px;width:61px;height:23px;background:#fff"></div>
<div class="t" style="left:242px;top:827px;font-size:11.2px;letter-spacing:0;transform:scaleX(0.8845);color:#333;">Workbench Client</div>
<svg style="left:326px;top:830px" width="8" height="8"><path d="M1 1l6 6M7 1l-6 6" stroke="#666" stroke-width="1.800"/></svg>
<div class="t" style="left:353px;top:827px;font-size:11.2px;letter-spacing:0;transform:scaleX(0.8586);color:#333;">Vulcan Console</div>
<svg style="left:426px;top:830px" width="8" height="8"><path d="M1 1l6 6M7 1l-6 6" stroke="#666" stroke-width="1.800"/></svg>
<div class="t" style="left:452px;top:826px;font-size:11.2px;letter-spacing:0;transform:scaleX(0.8572);color:#333;">Vulcan</div>
<svg style="left:486px;top:829px" width="8" height="8"><path d="M1 1l6 6M7 1l-6 6" stroke="#666" stroke-width="1.800"/></svg>
<div class="a" id="status"></div>
<div class="t" style="left:10px;top:850px;font-size:11.2px;letter-spacing:0;transform:scaleX(0.9104);font-weight:bold;color:#fff;">Use left button for rotating, middle for panning</div>
<div class="t" style="left:706px;top:850px;font-size:11.2px;letter-spacing:0;transform:scaleX(0.8629);color:#fff;">219512.86 , 166497.96, 1126.57</div>
<div class="t" style="left:1166px;top:850px;font-size:11.2px;letter-spacing:0;transform:scaleX(0.8924);color:#fff;">maptotal.dgd.isis</div>
<div class="a" style="left:820px;top:110.500px;width:218px;height:23px;background:#ffffe4"></div>
<div class="t" style="left:825px;top:114.5px;font-size:11.2px;letter-spacing:0;transform:scaleX(0.9066);color:#111;">Use left button for rotating, middle for panning</div>
<svg style="left:0;top:143px" width="228" height="664" viewBox="0 143 228 664">
<rect x="34.500" y="511.7" width="68" height="17" fill="#cde8ff" stroke="#7ab8e8" stroke-width="1"/>
<path d="M8.500 181.3V253.6" stroke="#bcbcbc" stroke-width="1"/>
<path d="M8.500 510.9V564.8" stroke="#bcbcbc" stroke-width="1"/>
<path d="M8.500 584.1V656.4" stroke="#bcbcbc" stroke-width="1"/>
<path d="M26.500 602.4V648.4H34" stroke="#bcbcbc" stroke-width="1" fill="none"/>
<path d="M26.500 529.2V556.8H34M26.500 538.5H34" stroke="#bcbcbc" stroke-width="1" fill="none" stroke-dasharray="1 1"/>
<path d="M6.5 150.0l5 4l-5 4z" fill="#707070"/>
<g transform="translate(20.5 147.5)"><rect x=".8" y="1.500" width="6" height="10" fill="#eaf3fb" stroke="#6aa0c8" stroke-width="1"/><path d="M2.500 4h2.500M2.500 6.500h2.500M2.500 9h2.500" stroke="#8fb8d8" stroke-width=".8"/><path d="M6 5.300h3.500v-2l3.500 3.200l-3.500 3.200v-2h-3.500z" fill="#2b2b2b"/></g>
<path d="M5.0 169.8h8l-4 5z" fill="#606060"/>
<g transform="translate(20.5 165.8)"><path d="M4 1h5v5h-5z" fill="#2f6fc0" stroke="#444" stroke-width=".7"/><path d="M4 1l1.500-1h5l-1.500 1zM9 1l1.500-1v5l-1.500 1z" fill="#cfd4da" stroke="#555" stroke-width=".5"/><path d="M.5 6.500h5v5h-5z" fill="#3a8a44" stroke="#333" stroke-width=".7"/><path d="M6 7.500h5.500v5h-5.500z" fill="#6aa05a" stroke="#333" stroke-width=".7"/><path d="M6 7.500l1.500-1.500h5.500l-1.500 1.500zM11.500 7.500l1.500-1.500v4.500l-1.500 2z" fill="#b9bec4" stroke="#444" stroke-width=".5"/><path d="M.5 6.500l1.500-1.500h3l-1 1.500z" fill="#aaa" stroke="#444" stroke-width=".5"/></g>
<path d="M24.1 186.6l5 4l-5 4z" fill="#707070"/>
<g transform="translate(38.1 184.1)"><path d="M4 1h5v5h-5z" fill="#2f6fc0" stroke="#444" stroke-width=".7"/><path d="M4 1l1.500-1h5l-1.500 1zM9 1l1.500-1v5l-1.500 1z" fill="#cfd4da" stroke="#555" stroke-width=".5"/><path d="M.5 6.500h5v5h-5z" fill="#3a8a44" stroke="#333" stroke-width=".7"/><path d="M6 7.500h5.500v5h-5.500z" fill="#6aa05a" stroke="#333" stroke-width=".7"/><path d="M6 7.500l1.500-1.500h5.500l-1.500 1.500zM11.500 7.500l1.500-1.500v4.500l-1.500 2z" fill="#b9bec4" stroke="#444" stroke-width=".5"/><path d="M.5 6.500l1.500-1.500h3l-1 1.500z" fill="#aaa" stroke="#444" stroke-width=".5"/></g>
<path d="M24.1 204.9l5 4l-5 4z" fill="#707070"/>
<g transform="translate(38.1 202.4)"><path d="M4 1h5v5h-5z" fill="#2f6fc0" stroke="#444" stroke-width=".7"/><path d="M4 1l1.500-1h5l-1.500 1zM9 1l1.500-1v5l-1.500 1z" fill="#cfd4da" stroke="#555" stroke-width=".5"/><path d="M.5 6.500h5v5h-5z" fill="#3a8a44" stroke="#333" stroke-width=".7"/><path d="M6 7.500h5.500v5h-5.500z" fill="#6aa05a" stroke="#333" stroke-width=".7"/><path d="M6 7.500l1.500-1.500h5.500l-1.500 1.500zM11.500 7.500l1.500-1.500v4.500l-1.500 2z" fill="#b9bec4" stroke="#444" stroke-width=".5"/><path d="M.5 6.500l1.500-1.500h3l-1 1.500z" fill="#aaa" stroke="#444" stroke-width=".5"/></g>
<path d="M24.1 223.2l5 4l-5 4z" fill="#707070"/>
<g transform="translate(38.1 220.7)"><path d="M4 1h5v5h-5z" fill="#2f6fc0" stroke="#444" stroke-width=".7"/><path d="M4 1l1.500-1h5l-1.500 1zM9 1l1.500-1v5l-1.500 1z" fill="#cfd4da" stroke="#555" stroke-width=".5"/><path d="M.5 6.500h5v5h-5z" fill="#3a8a44" stroke="#333" stroke-width=".7"/><path d="M6 7.500h5.500v5h-5.500z" fill="#6aa05a" stroke="#333" stroke-width=".7"/><path d="M6 7.500l1.500-1.500h5.500l-1.500 1.500zM11.500 7.500l1.500-1.500v4.500l-1.500 2z" fill="#b9bec4" stroke="#444" stroke-width=".5"/><path d="M.5 6.500l1.500-1.500h3l-1 1.500z" fill="#aaa" stroke="#444" stroke-width=".5"/></g>
<path d="M24.1 241.6l5 4l-5 4z" fill="#707070"/>
<g transform="translate(38.1 239.1)"><path d="M4 1h5v5h-5z" fill="#2f6fc0" stroke="#444" stroke-width=".7"/><path d="M4 1l1.500-1h5l-1.500 1zM9 1l1.500-1v5l-1.500 1z" fill="#cfd4da" stroke="#555" stroke-width=".5"/><path d="M.5 6.500h5v5h-5z" fill="#3a8a44" stroke="#333" stroke-width=".7"/><path d="M6 7.500h5.500v5h-5.500z" fill="#6aa05a" stroke="#333" stroke-width=".7"/><path d="M6 7.500l1.500-1.500h5.500l-1.500 1.500zM11.500 7.500l1.500-1.500v4.500l-1.500 2z" fill="#b9bec4" stroke="#444" stroke-width=".5"/><path d="M.5 6.500l1.500-1.500h3l-1 1.500z" fill="#aaa" stroke="#444" stroke-width=".5"/></g>
<g transform="translate(20.5 257.4)"><path d="M1.500 2.500v8c0 1.200 2 2 5 2s5-.8 5-2v-8" fill="#d9d9d9" stroke="#4a4a4a" stroke-width="1"/><ellipse cx="6.500" cy="2.500" rx="5" ry="1.800" fill="#efefef" stroke="#4a4a4a" stroke-width="1"/><path d="M1.500 5.200c0 1.200 2 2 5 2s5-.8 5-2M1.500 8c0 1.200 2 2 5 2s5-.8 5-2" fill="none" stroke="#4a4a4a" stroke-width="1"/></g>
<path d="M6.5 278.2l5 4l-5 4z" fill="#707070"/>
<g transform="translate(20.5 275.7)"><path d="M1.500 2.500v8c0 1.200 2 2 5 2s5-.8 5-2v-8" fill="#4f9a7a" stroke="#2a4a5a" stroke-width="1"/><ellipse cx="6.500" cy="2.500" rx="5" ry="1.800" fill="#7db4e0" stroke="#2a4a5a" stroke-width="1"/><path d="M1.500 5.200c0 1.200 2 2 5 2s5-.8 5-2M1.500 8c0 1.200 2 2 5 2s5-.8 5-2" fill="none" stroke="#234" stroke-width="1"/></g>
<g transform="translate(20.5 294.0)"><rect x="1" y="1" width="11" height="11" fill="#fff" stroke="#333" stroke-width="1"/><path d="M1 4.700h11M1 8.400h11M4.700 1v11M8.400 1v11" stroke="#333" stroke-width="1"/></g>
<g transform="translate(20.5 312.3)"><path d="M3 .5h6l3 3v9h-9z" fill="#fff" stroke="#555" stroke-width="1"/><path d="M9 .5v3h3" fill="none" stroke="#555" stroke-width=".8"/><path d="M1 6.500v5.500h5.500zM1.500 7l4 4" fill="#1f8a3a" stroke="#1f8a3a" stroke-width="1.200"/></g>
<g transform="translate(20.5 330.6)"><path d="M2 .5h6l3 3v9h-9z" fill="#fff" stroke="#555" stroke-width="1"/><path d="M8 .5v3h3" fill="none" stroke="#555" stroke-width=".8"/><path d="M4 5h4M4 7h3M4 9h4M4 11h2" stroke="#d03020" stroke-width="1"/></g>
<path d="M6.5 351.4l5 4l-5 4z" fill="#707070"/>
<g transform="translate(20.5 348.9)"><path d="M2 .5h6l3 3v9h-9z" fill="#fff" stroke="#4a4a4a" stroke-width="1"/><path d="M8 .5v3h3" fill="none" stroke="#4a4a4a" stroke-width=".8"/></g>
<g transform="translate(20.5 367.2)"><path d="M1.500 2.500v8c0 1.200 2 2 5 2s5-.8 5-2v-8" fill="#d9d9d9" stroke="#4a4a4a" stroke-width="1"/><ellipse cx="6.500" cy="2.500" rx="5" ry="1.800" fill="#efefef" stroke="#4a4a4a" stroke-width="1"/><path d="M1.500 5.200c0 1.200 2 2 5 2s5-.8 5-2M1.500 8c0 1.200 2 2 5 2s5-.8 5-2" fill="none" stroke="#4a4a4a" stroke-width="1"/></g>
<g transform="translate(20.5 385.5)"><rect x=".5" y=".5" width="12" height="12" fill="#e8f0fb" stroke="#1e63b8" stroke-width="1"/><path d="M.5 3.500h12M.5 6.500h12M.5 9.500h12M3.500 .5v12M6.500 .5v12M9.500 .5v12" stroke="#1e63b8" stroke-width="1"/></g>
<g transform="translate(20.5 403.8)"><path d="M.8 1.500h11.500v6.500h-11.500z" fill="#fff" stroke="#333" stroke-width="1.200"/><path d="M3 8v3.500M10 8v2.500M3 11.500l3-1" stroke="#333" stroke-width="1.100" fill="none"/><path d="M2.500 4h8" stroke="#999" stroke-width=".8"/></g>
<g transform="translate(20.5 422.1)"><path d="M3 1.500h4.500c1 0 1.500.5 1.500 1.500v2.500h-4.500c-1 0-1.500.7-1.500 1.500h-1.500c-.7-1-.7-3 0-4c.3-.5.8-1 2-1z" fill="#3a73a8"/><path d="M10.500 5.500c.8 1 .8 3.200 0 4.200c-.3.500-.8.800-2 .8h-4c-1 0-1.500-.5-1.500-1.500v-1c0-.8.500-1.500 1.500-1.500h4.500v-1z" fill="#f1c232"/><path d="M5 11.500h4c1 0 1.500-.4 1.500-1.200" fill="none" stroke="#c89a10" stroke-width="1"/></g>
<g transform="translate(20.5 440.5)"><circle cx="4" cy="7" r="3.500" fill="#8a9098" stroke="#555" stroke-width=".8"/><circle cx="8.500" cy="6" r="3.800" fill="#aab4c0" stroke="#4a5560" stroke-width=".8"/><path d="M6 6.500l2-2l2.500 3z" fill="#2a6a9a"/></g>
<path d="M6.5 461.3l5 4l-5 4z" fill="#707070"/>
<g transform="translate(20.5 458.8)"><path d="M1.500 11.500V2h4l1.200 1.600h5.800v7.900z" fill="#f0b22c" stroke="#b8861a" stroke-width=".9"/><rect x="2.500" y="4.800" width="9" height="6" fill="#f6c445"/></g>
<path d="M6.5 479.6l5 4l-5 4z" fill="#707070"/>
<g transform="translate(20.5 477.1)"><path d="M1.500 11.500V2h4l1.200 1.600h5.800v7.900z" fill="#f0b22c" stroke="#b8861a" stroke-width=".9"/><rect x="2.500" y="4.800" width="9" height="6" fill="#f6c445"/></g>
<path d="M5.0 499.4h8l-4 5z" fill="#606060"/>
<g transform="translate(20.5 495.4)"><path d="M6.500 1l6 11h-12z" fill="#b9b9b9" stroke="#6e6e6e" stroke-width="1"/><path d="M6.500 3.500l3.800 7.500h-5z" fill="#a4a4a4"/></g>
<path d="M24.1 516.2l5 4l-5 4z" fill="#707070"/>
<g transform="translate(38.1 513.7)"><path d="M.5 12V1h4.500l1.200 1.800h6.300v9.200z" fill="#e89a28" stroke="#b8761a" stroke-width=".9"/><path d="M7.500 4l4.500 8h-9z" fill="#c8c8c8" stroke="#666" stroke-width=".8"/></g>
<g transform="translate(38.1 532.0)"><path d="M6.500 1l6 11h-12z" fill="#b9b9b9" stroke="#6e6e6e" stroke-width="1"/><path d="M6.500 3.500l3.800 7.500h-5z" fill="#a4a4a4"/></g>
<g transform="translate(38.1 550.3)"><path d="M6.500 1l6 11h-12z" fill="#b9b9b9" stroke="#6e6e6e" stroke-width="1"/><path d="M6.500 3.500l3.800 7.500h-5z" fill="#a4a4a4"/></g>
<path d="M5.0 572.6h8l-4 5z" fill="#606060"/>
<g transform="translate(20.5 568.6)"><path d="M1.500 2.500v8c0 1.200 2 2 5 2s5-.8 5-2v-8" fill="#d9d9d9" stroke="#4a4a4a" stroke-width="1"/><ellipse cx="6.500" cy="2.500" rx="5" ry="1.800" fill="#efefef" stroke="#4a4a4a" stroke-width="1"/><path d="M1.500 5.200c0 1.200 2 2 5 2s5-.8 5-2M1.500 8c0 1.200 2 2 5 2s5-.8 5-2" fill="none" stroke="#4a4a4a" stroke-width="1"/></g>
<path d="M22.6 590.9h8l-4 5z" fill="#606060"/>
<g transform="translate(38.1 586.9)"><path d="M1.500 2.500v8c0 1.200 2 2 5 2s5-.8 5-2v-8" fill="#d9d9d9" stroke="#4a4a4a" stroke-width="1"/><ellipse cx="6.500" cy="2.500" rx="5" ry="1.800" fill="#efefef" stroke="#4a4a4a" stroke-width="1"/><path d="M1.500 5.200c0 1.200 2 2 5 2s5-.8 5-2M1.500 8c0 1.200 2 2 5 2s5-.8 5-2" fill="none" stroke="#4a4a4a" stroke-width="1"/></g>
<path d="M41.7 607.8l5 4l-5 4z" fill="#707070"/>
<g transform="translate(55.7 605.2)"><path d="M1.500 2.500v8c0 1.200 2 2 5 2s5-.8 5-2v-8" fill="#d9d9d9" stroke="#4a4a4a" stroke-width="1"/><ellipse cx="6.500" cy="2.500" rx="5" ry="1.800" fill="#efefef" stroke="#4a4a4a" stroke-width="1"/><path d="M1.500 5.200c0 1.200 2 2 5 2s5-.8 5-2M1.500 8c0 1.200 2 2 5 2s5-.8 5-2" fill="none" stroke="#4a4a4a" stroke-width="1"/></g>
<path d="M41.7 626.1l5 4l-5 4z" fill="#707070"/>
<g transform="translate(55.7 623.6)"><path d="M1.500 2.500v8c0 1.200 2 2 5 2s5-.8 5-2v-8" fill="#d9d9d9" stroke="#4a4a4a" stroke-width="1"/><ellipse cx="6.500" cy="2.500" rx="5" ry="1.800" fill="#efefef" stroke="#4a4a4a" stroke-width="1"/><path d="M1.500 5.200c0 1.200 2 2 5 2s5-.8 5-2M1.500 8c0 1.200 2 2 5 2s5-.8 5-2" fill="none" stroke="#4a4a4a" stroke-width="1"/></g>
<g transform="translate(38.1 641.9)"><path d="M1.500 2.500v8c0 1.200 2 2 5 2s5-.8 5-2v-8" fill="#d9d9d9" stroke="#4a4a4a" stroke-width="1"/><ellipse cx="6.500" cy="2.500" rx="5" ry="1.800" fill="#efefef" stroke="#4a4a4a" stroke-width="1"/><path d="M1.500 5.200c0 1.200 2 2 5 2s5-.8 5-2M1.500 8c0 1.200 2 2 5 2s5-.8 5-2" fill="none" stroke="#4a4a4a" stroke-width="1"/></g>
<path d="M6.5 662.7l5 4l-5 4z" fill="#707070"/>
<g transform="translate(20.5 660.2)"><path d="M3.500 .5h6l2.500 2.500v7h-8.500z" fill="#fff" stroke="#444" stroke-width="1"/><path d="M1 3h6l2.500 2.500v7h-8.500z" fill="#f4f4f4" stroke="#444" stroke-width="1"/><path d="M2.500 7h4M2.500 9h4" stroke="#555" stroke-width=".9"/><path d="M6 10l2 2l3.500-3.500" stroke="#2a8a3a" stroke-width="1.400" fill="none"/></g>
<path d="M6.5 681.0l5 4l-5 4z" fill="#707070"/>
<g transform="translate(20.5 678.5)"><path d="M2 .5h6l3 3v9h-9z" fill="#fff" stroke="#4a4a4a" stroke-width="1"/><path d="M8 .5v3h3" fill="none" stroke="#4a4a4a" stroke-width=".8"/></g>
</svg>
<div class="t" style="left:37px;top:147.0px;font-size:11.2px;letter-spacing:0;transform:scaleX(0.8694);color:#383838;">Loaded Items</div>
<div class="t" style="left:37px;top:165.3px;font-size:11.2px;letter-spacing:0;transform:scaleX(0.8709);color:#383838;">Block Models</div>
<div class="t" style="left:54px;top:183.6px;font-size:11.2px;letter-spacing:0;transform:scaleX(0.9109);color:#383838;">webinar.bmf</div>
<div class="t" style="left:54px;top:201.9px;font-size:11.2px;letter-spacing:0;transform:scaleX(0.8959);font-weight:bold;color:#000;">webinar_run01.bmf</div>
<div class="t" style="left:54px;top:220.2px;font-size:11.2px;letter-spacing:0;transform:scaleX(0.8792);color:#383838;">webinar_run02_reg.bmf</div>
<div class="t" style="left:54px;top:238.6px;font-size:11.2px;letter-spacing:0;transform:scaleX(0.8866);color:#383838;">webinar_run04.bmf</div>
<div class="t" style="left:37px;top:256.9px;font-size:11.2px;letter-spacing:0;transform:scaleX(0.8627);color:#383838;">Data Designs</div>
<div class="t" style="left:37px;top:275.2px;font-size:11.2px;letter-spacing:0;transform:scaleX(0.8523);color:#383838;">Design Databases</div>
<div class="t" style="left:37px;top:293.5px;font-size:11.2px;letter-spacing:0;transform:scaleX(0.8779);color:#383838;">Grid Models</div>
<div class="t" style="left:37px;top:311.8px;font-size:11.2px;letter-spacing:0;transform:scaleX(0.8980);color:#383838;">Importable (or Exported)</div>
<div class="t" style="left:37px;top:330.1px;font-size:11.2px;letter-spacing:0;transform:scaleX(0.8276);color:#383838;">Lava Scripts</div>
<div class="t" style="left:37px;top:348.4px;font-size:11.2px;letter-spacing:0;transform:scaleX(0.8577);color:#383838;">Managed Files</div>
<div class="t" style="left:37px;top:366.7px;font-size:11.2px;letter-spacing:0;transform:scaleX(0.8446);color:#383838;">Map Files</div>
<div class="t" style="left:37px;top:385.0px;font-size:11.2px;letter-spacing:0;transform:scaleX(0.8555);color:#383838;">Panel Caving Designer</div>
<div class="t" style="left:37px;top:403.3px;font-size:11.2px;letter-spacing:0;transform:scaleX(0.8468);color:#383838;">Plot Files</div>
<div class="t" style="left:37px;top:421.6px;font-size:11.2px;letter-spacing:0;transform:scaleX(0.8725);color:#383838;">Python Scripts</div>
<div class="t" style="left:37px;top:440.0px;font-size:11.2px;letter-spacing:0;transform:scaleX(0.8617);color:#383838;">Registered Images</div>
<div class="t" style="left:37px;top:458.3px;font-size:11.2px;letter-spacing:0;transform:scaleX(0.8319);color:#383838;">Resource Databases</div>
<div class="t" style="left:37px;top:476.6px;font-size:11.2px;letter-spacing:0;transform:scaleX(0.8683);color:#383838;">Specifications</div>
<div class="t" style="left:37px;top:494.9px;font-size:11.2px;letter-spacing:0;transform:scaleX(0.8723);color:#383838;">Triangulations</div>
<div class="t" style="left:54px;top:513.2px;font-size:11.2px;letter-spacing:0;transform:scaleX(0.8946);color:#383838;">geocod.tri</div>
<div class="t" style="left:54px;top:531.5px;font-size:11.2px;letter-spacing:0;transform:scaleX(0.8612);color:#383838;">base.00t</div>
<div class="t" style="left:54px;top:549.8px;font-size:11.2px;letter-spacing:0;transform:scaleX(0.9388);color:#383838;">topo.00t</div>
<div class="t" style="left:37px;top:568.1px;font-size:11.2px;letter-spacing:0;transform:scaleX(0.8344);color:#383838;">User Databases</div>
<div class="t" style="left:54px;top:586.4px;font-size:11.2px;letter-spacing:0;transform:scaleX(0.8742);color:#383838;">Headered</div>
<div class="t" style="left:72px;top:604.8px;font-size:11.2px;letter-spacing:0;transform:scaleX(0.8685);color:#383838;">mapwebinar_comp.cmp.isis</div>
<div class="t" style="left:72px;top:623.1px;font-size:11.2px;letter-spacing:0;transform:scaleX(0.8608);font-weight:bold;color:#000;">webinar.dhd.isis</div>
<div class="t" style="left:54px;top:641.4px;font-size:11.2px;letter-spacing:0;transform:scaleX(0.8035);color:#383838;">ODBC</div>
<div class="t" style="left:37px;top:659.7px;font-size:11.2px;letter-spacing:0;transform:scaleX(0.8942);color:#383838;">Workflows</div>
<div class="t" style="left:37px;top:678.0px;font-size:11.2px;letter-spacing:0;transform:scaleX(0.8612);color:#383838;">Unclassified</div>
<svg style="left:232px;top:106px" width="50" height="560" viewBox="232 106 50 560">
<path d="M239 113.5H252" stroke="#b4b4b4" stroke-width="1.500" stroke-dasharray="1 2"/>
<path d="M262 113.5H275" stroke="#b4b4b4" stroke-width="1.500" stroke-dasharray="1 2"/>
<path d="M239 655.5H252" stroke="#b4b4b4" stroke-width="1.500" stroke-dasharray="1 2"/><path d="M239 652.5H252" stroke="#b4b4b4" stroke-width="1.500" stroke-dasharray="1 2"/>
<path d="M262 655.5H275" stroke="#b4b4b4" stroke-width="1.500" stroke-dasharray="1 2"/><path d="M262 652.5H275" stroke="#b4b4b4" stroke-width="1.500" stroke-dasharray="1 2"/>
<g transform="translate(237.0 120.2)"><path d="M2 8l5-2l6 2l-5 2zM2 10.500l5-2l6 2l-5 2zM2 13l5-2l6 2l-5 2z" fill="#f4f4f4" stroke="#333" stroke-width="1"/><path d="M12.500 1v5M10 3.500h5" stroke="#1f9a3a" stroke-width="1.800"/></g>
<g transform="translate(237.0 138.5)"><circle cx="8" cy="8" r="1.300" fill="#222"/></g>
<g transform="translate(237.0 156.8)"><path d="M3 13L13 3" stroke="#222" stroke-width="1.400"/><circle cx="3" cy="13" r="1.400" fill="#222"/><circle cx="13" cy="3" r="1.400" fill="#222"/></g>
<g transform="translate(237.0 175.2)"><path d="M3 3h10l-4 5l4 5h-10z" fill="#f2f2f2" stroke="#444" stroke-width="1.200"/></g>
<g transform="translate(237.0 193.5)"><rect x="2" y="2.500" width="12" height="11" fill="#5aa8e8" stroke="#555" stroke-width="1"/><path d="M2.500 13v-4l3-2l3 2l2-1l3 2v3z" fill="#3a8a2a"/><circle cx="11" cy="5.500" r="1.500" fill="#f8d040"/></g>
<g transform="translate(237.0 211.8)"><rect x="3" y="3.500" width="10" height="9" fill="#e2e2e2" stroke="#444" stroke-width="1.200"/></g>
<g transform="translate(237.0 230.1)"><path d="M1.500 10c2-6 5-6 6.500-2s4 4 6.500-2" fill="none" stroke="#222" stroke-width="1.400"/></g>
<g transform="translate(237.0 248.4)"><path d="M3 14c0-6 4-10 10-10" fill="none" stroke="#333" stroke-width="1.400"/><circle cx="3" cy="14" r="1.300" fill="#d02020"/><circle cx="13" cy="4" r="1.300" fill="#d02020"/></g>
<g transform="translate(237.0 266.8)"><ellipse cx="8" cy="8" rx="6" ry="3.500" fill="none" stroke="#222" stroke-width="1.400"/></g>
<g transform="translate(237.0 285.1)"><circle cx="4" cy="4" r="1.300" fill="#222"/><circle cx="4" cy="8" r="1.300" fill="#222"/><circle cx="4" cy="12" r="1.300" fill="#222"/><circle cx="8" cy="4" r="1.300" fill="#222"/><circle cx="8" cy="8" r="1.300" fill="#222"/><circle cx="8" cy="12" r="1.300" fill="#222"/><circle cx="12" cy="4" r="1.300" fill="#222"/><circle cx="12" cy="8" r="1.300" fill="#222"/><circle cx="12" cy="12" r="1.300" fill="#222"/></g>
<g transform="translate(237.0 303.4)"><path d="M14 2l-11 5l4 1l-3 4l2 1.500l3-4l2 3z" fill="#fff" stroke="#222" stroke-width="1.200"/></g>
<g transform="translate(237.0 321.7)"><path d="M14 2l-3 8l-2-2l-6 6l-1.500-1.500l6-6l-2-2z" fill="#1a6ab8" stroke="#0e4a88" stroke-width=".6"/></g>
<g transform="translate(237.0 340.0)"><text x="2" y="14" font-family="Liberation Serif,serif" font-weight="bold" font-size="16" fill="#111">A</text></g>
<g transform="translate(237.0 358.4)"><text x="3" y="14" font-family="Liberation Serif,serif" font-weight="bold" font-style="italic" font-size="16" fill="#2a6ac0">A</text><path d="M1 13l6-3" stroke="#7aa8e0" stroke-width="2"/></g>
<g transform="translate(237.0 376.7)"><rect x="3" y="2" width="10" height="12" fill="#e6f0e8" stroke="#556" stroke-width="1"/><path d="M3 5.500h10M3 9h10M8 2v7" stroke="#4a7aa8" stroke-width="1"/><rect x="4" y="10" width="8" height="3" fill="#7ab87a"/></g>
<g transform="translate(237.0 395.0)"><rect x="2.500" y="2" width="11" height="12" fill="#1a5fb0"/><path d="M8 4.500l3.500 4.500h-2.200v0h-2.600h-2.200zM7.300 9h1.400v2.500h-1.400zM5.500 12h5" fill="#fff" stroke="#fff" stroke-width=".8"/></g>
<g transform="translate(259.5 120.2)"><path d="M3 3l10 10M13 3L3 13" stroke="#e84a20" stroke-width="3.200" stroke-linecap="round"/></g>
<g transform="translate(259.5 138.5)"><path d="M8 1.500v13M1.500 8h13" stroke="#222" stroke-width="1.300"/><path d="M8 0l2.500 3h-5zM8 16l2.500-3h-5zM0 8l3-2.500v5zM16 8l-3-2.500v5z" fill="#222"/><path d="M13 14l3 0l0-3z" fill="#e03030"/></g>
<g transform="translate(259.5 156.8)"><path d="M4 3v11" stroke="#222" stroke-width="1.300"/><circle cx="4" cy="3" r="1.300" fill="#222"/><circle cx="4" cy="14" r="1.300" fill="#222"/><path d="M14 3l-7 6M7 9v-4M7 9h4" stroke="#222" stroke-width="1.300" fill="none"/><path d="M13 14l3 0l0-3z" fill="#e03030"/></g>
<g transform="translate(259.5 175.2)"><path d="M2 5h5l7 7h-11" fill="none" stroke="#222" stroke-width="1.300"/><circle cx="7" cy="5" r="1.300" fill="#222"/><circle cx="14" cy="12" r="1.500" fill="#c02020"/><circle cx="3" cy="12" r="1.300" fill="#222"/><path d="M7 5c3 0 6 3 7 7" fill="none" stroke="#222" stroke-width="1" stroke-dasharray="1.500 1"/></g>
<g transform="translate(259.5 193.5)"><path d="M3 11l8-8" stroke="#222" stroke-width="1.300"/><circle cx="3" cy="11" r="1.300" fill="#222"/><circle cx="11" cy="3" r="1.300" fill="#222"/><text x="4" y="16.500" font-size="6.500" font-weight="bold" font-family="Liberation Sans,sans-serif" fill="#222">1</text><text x="11.500" y="10" font-size="6.500" font-weight="bold" font-family="Liberation Sans,sans-serif" fill="#222">2</text><path d="M13 14l3 0l0-3z" fill="#e03030"/></g>
<g transform="translate(259.5 211.8)"><path d="M1 8h9" stroke="#111" stroke-width="1.800"/><path d="M13 3l-5 11" stroke="#555" stroke-width="1.200"/><path d="M10.500 8h4" stroke="#888" stroke-width="1"/><path d="M13 14l3 0l0-3z" fill="#e03030"/></g>
<g transform="translate(259.5 230.1)"><path d="M2.500 2v12M13.500 2v12" stroke="#111" stroke-width="1.800"/><path d="M4.500 8h5" stroke="#1a6ab8" stroke-width="1.500"/><path d="M12 8l-3.500-2.500v5z" fill="#1a6ab8"/></g>
<g transform="translate(259.5 248.4)"><path d="M6 3.500h-3v3M3 9.500v3h3M10 3.500h3v3M13 9.500v3h-3" fill="none" stroke="#222" stroke-width="1.800"/></g>
<g transform="translate(259.5 266.8)"><path d="M8 1.500v13" stroke="#222" stroke-width="1.200"/><path d="M5.500 4h-3v8h3M10.500 4h3v8h-3" fill="none" stroke="#222" stroke-width="1.500" stroke-dasharray="3 2"/></g>
<g transform="translate(259.5 285.1)"><rect x="2" y="1.500" width="7" height="8" fill="#d8d8d8" stroke="#444" stroke-width="1"/><rect x="5" y="4.500" width="7" height="8" fill="#ececec" stroke="#444" stroke-width="1"/><rect x="7.500" y="7.500" width="7" height="7.500" fill="#fff" stroke="#333" stroke-width="1"/><path d="M9 9.500l4 4M13 9.500l-4 4" stroke="#333" stroke-width="1"/></g>
<g transform="translate(259.5 303.4)"><path d="M4 14v-5c0-3 2-5 5-5h5" fill="none" stroke="#333" stroke-width="1.300"/><path d="M4 4h3" stroke="#999" stroke-width="1"/></g>
<g transform="translate(259.5 321.7)"><rect x="1.500" y="1.500" width="13" height="13" fill="#fff" stroke="#333" stroke-width="1"/><path d="M3.500 3.500l9 9M12.500 3.500l-9 9" stroke="#444" stroke-width=".8"/><path d="M3 3h2.500M3 3v2.500M13 3h-2.500M13 3v2.500M3 13h2.500M3 13v-2.500M13 13h-2.500M13 13v-2.500" stroke="#222" stroke-width="1"/></g>
<g transform="translate(259.5 340.0)"><rect x="2" y="9" width="4.500" height="5" fill="#fff" stroke="#333" stroke-width="1"/><path d="M8 14v-6.500h3l2 2v4.500z" fill="#fff" stroke="#333" stroke-width="1"/><path d="M5 5c2-2 5-2 7 0" fill="none" stroke="#222" stroke-width="1.200"/><path d="M13.500 6.500l-3.500-.5l2.500-2.500z" fill="#222"/></g>
<g transform="translate(259.5 358.4)"><circle cx="7" cy="10" r="5" fill="#3a3a3a"/><path d="M10 6l2-2" stroke="#444" stroke-width="1.500"/><path d="M13 1v2M14.500 2.500l-1.500 1M15 4.500h-2" stroke="#8a8a8a" stroke-width="1" stroke-dasharray="1 1"/></g>
<g transform="translate(259.5 376.7)"><path d="M3 14V5l8 9z" fill="none" stroke="#333" stroke-width="1.300"/><path d="M3 11h3v3" fill="none" stroke="#333" stroke-width="1"/><path d="M10 2l4 4M14 2l-4 4" stroke="#e84a20" stroke-width="1.600"/></g>
</svg>
<svg style="left:1573px;top:106px" width="26" height="580" viewBox="1573 106 26 580">
<path d="M1578 113.5H1591" stroke="#b4b4b4" stroke-width="1.500" stroke-dasharray="1 2"/>
<path d="M1578 501H1591" stroke="#b4b4b4" stroke-width="1.500" stroke-dasharray="1 2"/>
<path d="M1579 656.5H1594" stroke="#b4b4b4" stroke-width="1.500" stroke-dasharray="1 2"/><path d="M1579 654H1594" stroke="#b4b4b4" stroke-width="1.500" stroke-dasharray="1 2"/>
<path d="M1590.500 666V681M1593.500 666V681" stroke="#b4b4b4" stroke-width="1.500" stroke-dasharray="1 2"/>
<path d="M1577 212.500h15M1577 308.500h15" stroke="#c4c4c4" stroke-width="1"/>
<g transform="translate(1576.0 119.3)"><circle cx="6.500" cy="6.500" r="4.300" fill="#f0f4f8" stroke="#555" stroke-width="1.500"/><path d="M9.500 9.500l5 5" stroke="#555" stroke-width="2.200"/></g>
<g transform="translate(1576.0 138.0)"><rect x="6.500" y="2.500" width="8" height="6" fill="#fff" stroke="#3a6aa0" stroke-width="1.200"/><rect x="1.500" y="7.500" width="8" height="6" fill="#fff" stroke="#3a6aa0" stroke-width="1.200"/></g>
<g transform="translate(1576.0 156.0)"><path d="M7 1v9l-5 5M7 10h8" fill="none" stroke="#222" stroke-width="1.300"/><path d="M9 11l3 3" stroke="#2a6ac0" stroke-width="1.500"/></g>
<g transform="translate(1576.0 174.5)"><rect x="0" y="0" width="16" height="16" fill="#d4e4f8"/><path d="M4 3v8l-3 3M4 11h10" fill="none" stroke="#222" stroke-width="1.200"/><circle cx="10.500" cy="5.500" r="3.300" fill="url(#gRed)"/><text x="1" y="6" font-size="6" font-weight="bold" font-family="Liberation Sans,sans-serif" fill="#111">z</text><path d="M13 14l3 0l0-3z" fill="#e03030"/></g>
<g transform="translate(1576.0 192.5)"><path d="M2 5h7v6h-7zM3 3.500h2v1.500h-2zM6 3.500h2v1.500h-2z" fill="#222"/><path d="M9 8h4" stroke="#2a6ac0" stroke-width="1.200"/><path d="M15 8l-3-2v4z" fill="#2a6ac0"/><path d="M13 14l3 0l0-3z" fill="#e03030"/></g>
<g transform="translate(1576.0 215.5)"><circle cx="8" cy="8" r="6.500" fill="#1a60b0" stroke="#0c3c7a" stroke-width=".8"/><text x="4.200" y="12" font-size="10.500" font-weight="bold" font-family="Liberation Sans,sans-serif" fill="#fff">R</text></g>
<g transform="translate(1576.0 234.0)"><circle cx="8" cy="8" r="6.500" fill="#1a60c0"/><path d="M4 4c2-1 4 0 4 2s-2 2-2 4s-3 0-3-2s0-3 1-4zM10 8c2 0 3 1 3 3s-2 2-3 1z" fill="#3aa040"/><path d="M13 14l3 0l0-3z" fill="#e03030"/></g>
<g transform="translate(1576.0 252.0)"><rect x="1.500" y="3" width="13" height="10" fill="#fff" stroke="#444" stroke-width="1"/><path d="M1.500 7h13M8 7v6" stroke="#444" stroke-width="1"/><rect x="2" y="3.500" width="12" height="3" fill="#cfdff0"/></g>
<g transform="translate(1576.0 270.5)"><rect x="1.500" y="2.500" width="12" height="9" fill="#fff" stroke="#2a50a0" stroke-width="1.200"/><path d="M6 12l4-5l5 2l-3 5z" fill="#d8d0b0" stroke="#555" stroke-width=".8"/><path d="M3 5h8" stroke="#88a" stroke-width="1"/></g>
<g transform="translate(1576.0 288.5)"><path d="M3 9l7-6l4 2l-7 6z" fill="#e8dcb0" stroke="#887" stroke-width=".8"/><path d="M5 10l4 5" stroke="#c8a020" stroke-width="1.600"/></g>
<g transform="translate(1576.0 311.5)"><rect x="0" y="0" width="16" height="16" fill="#d4e4f8"/><rect x="2" y="2" width="12" height="10" fill="#5aa8e8" stroke="#345" stroke-width="1"/><path d="M2.500 11.500v-3l3-2l3 2l2-1l3 2v2z" fill="#3a8a2a"/><path d="M9 14.500h5" stroke="#222" stroke-width="1.500" stroke-dasharray="1 1"/></g>
<g transform="translate(1576.0 329.5)"><path d="M2.500 6h8v8h-8zM2.500 6l3-3h8l-3 3M13.500 3v8l-3 3" fill="#f4f4f4" stroke="#555" stroke-width="1"/></g>
<g transform="translate(1576.0 347.5)"><rect x="0" y="0" width="16" height="16" fill="#d4e4f8"/><rect x="2" y="4.500" width="8" height="8" fill="#3a9ae0" stroke="#1a5fa0" stroke-width="1"/><rect x="6" y="1.500" width="8" height="8" fill="#58b0f0" stroke="#1a5fa0" stroke-width="1" opacity=".85"/><path d="M9 14.500h5" stroke="#222" stroke-width="1.500" stroke-dasharray="1 1"/></g>
<g transform="translate(1576.0 366.0)"><path d="M2 5l8-3l4 3l-2 8l-7 1zM2 5l6 2l6-2M8 7l-3 7M8 7l4 6" fill="none" stroke="#222" stroke-width="1.200"/></g>
<g transform="translate(1576.0 384.0)"><path d="M2.500 6.500h9v7h-9zM4.500 6v-2h9v7h-2M6.500 4v-2h8v7h-1" fill="#e8e8e8" stroke="#444" stroke-width="1"/><path d="M9 15h5" stroke="#222" stroke-width="1.500" stroke-dasharray="1 1"/></g>
<g transform="translate(1576.0 402.5)"><path d="M2.500 6.500h9v7h-9zM4.500 6v-2h9v7h-2M6.500 4v-2h8v7h-1" fill="#6a8aa8" stroke="#345" stroke-width="1"/><circle cx="7" cy="10" r="2.500" fill="#4a9ad8"/></g>
<g transform="translate(1576.0 421.0)"><path d="M2.500 6.500h9v7h-9zM4.500 6v-2h9v7h-2" fill="#f0f0f0" stroke="#444" stroke-width="1"/><circle cx="7" cy="9.500" r="2" fill="#2a7ad0"/><path d="M8.500 11l4 4" stroke="#1a5fb0" stroke-width="2"/></g>
<g transform="translate(1576.0 439.0)"><rect x="2" y="2" width="11" height="11" fill="#fff" stroke="#333" stroke-width="1"/><path d="M2 5.700h11M2 9.400h11M5.700 2v11M9.400 2v11" stroke="#333" stroke-width="1"/><path d="M9 15h5" stroke="#222" stroke-width="1.500" stroke-dasharray="1 1"/></g>
<g transform="translate(1576.0 457.5)"><rect x="2" y="2" width="11" height="11" fill="#fff" stroke="#222" stroke-width="1.200"/><circle cx="7.500" cy="7.500" r="3" fill="none" stroke="#222" stroke-width="1.200"/><path d="M7.500 2v11M2 7.500h11" stroke="#222" stroke-width="1"/><path d="M9 15h5" stroke="#222" stroke-width="1.500" stroke-dasharray="1 1"/></g>
<g transform="translate(1576.0 476.0)"><path d="M2 3h6v4h-6zM3 2h1.500v1h-1.500zM5.500 2h1.500v1h-1.500zM8 10h6v4h-6zM9 9h1.500v1h-1.500zM11.500 9h1.500v1h-1.500z" fill="#111"/><path d="M2 14l12-12" stroke="#2a6ac0" stroke-width="1.400"/></g>
</svg>
<svg style="left:232px;top:660px" width="440" height="25" viewBox="232 660 440 25">
<circle cx="254" cy="671.5" r="5" fill="url(#gGold)"/><circle cx="272" cy="671.5" r="5" fill="url(#gWhite)"/><circle cx="290" cy="671.5" r="5" fill="url(#gGray)"/><circle cx="308.5" cy="671.5" r="5" fill="url(#gRed)"/>
<circle cx="329.5" cy="669.5" r="4.2" fill="url(#gSky)"/><circle cx="325" cy="673.5" r="4.6" fill="url(#gSky)"/>
<path d="M343.500 664V680M461.500 663V681M539.500 663V681M632.500 663V681" stroke="#c0c0c0" stroke-width="1" />
<path d="M343.500 664V680" stroke="#b0b0b0" stroke-width="1.500" stroke-dasharray="1 2"/>
<rect x="350" y="663" width="17" height="18" fill="#cfe2f8"/>
<path d="M354 665l9 5.500l-4 .8l2.500 5l-1.800 .9l-2.500-5l-3 3z" fill="#fff" stroke="#223" stroke-width="1"/>
<g fill="none" stroke="#222" stroke-width="1.200">
<path d="M376.500 665v13M370 671.500h13M372.500 667.500h8v8h-8z"/>
<circle cx="394.500" cy="671.500" r="4"/><path d="M394.500 665v13M388 671.500h13"/>
<path d="M404 671.500h3M416 671.500h3" stroke-dasharray="1.500 1"/>
<path d="M426 666h11v11h-11zM426 669.700h11M426 673.400h11M429.700 666v11M433.400 666v11" stroke-width="1"/>
<path d="M444 674c2-5 8-9 10-7s-3 5-6 6c3 0 6 1 8 4" stroke-width="1.300"/>
<rect x="466.500" y="665.500" width="12" height="12"/>
<path d="M502 677h13M503 677l9-9M507 673c1 1 1.500 2 1.500 4" stroke-width="1.200"/>
</g>
<text x="407.500" y="676" font-family="Liberation Sans,sans-serif" font-size="11" font-weight="bold" fill="#222">S</text><path d="M410 679h8" stroke="#222" stroke-width="1.500" stroke-dasharray="1 1"/>
<text x="469" y="675.500" font-family="Liberation Sans,sans-serif" font-size="10" font-weight="bold" fill="#222">A</text>
<text x="484.500" y="677" font-family="Liberation Sans,sans-serif" font-size="13" fill="#111">A</text><path d="M490 664v3" stroke="#222" stroke-width="1.200"/><circle cx="490" cy="664.500" r="1" fill="#222"/>
<path d="M521 666c-3 2 3 4 0 6s3 3 0 6M525.500 666c-3 2 3 4 0 6s3 3 0 6M530 666c-3 2 3 4 0 6s3 3 0 6" fill="none" stroke="#d03828" stroke-width="1.200"/>
<rect x="578.500" y="662.500" width="32" height="18" fill="#fff" stroke="#b0b0b0"/>
<path d="M614 665.500l12 12M626 665.500l-12 12" stroke="#444" stroke-width="3.400"/><path d="M614 665.500l12 12M626 665.500l-12 12" stroke="#f4f4f4" stroke-width="1.600"/>
<path d="M638 671l5-3.500l7 1v5l-5 3.500l-7-1zM638 671l7 1l5-3.500M645 672v5" fill="#eee" stroke="#333" stroke-width="1"/><path d="M642 679.500h8" stroke="#222" stroke-width="1.500" stroke-dasharray="1 1"/>
</svg>
<div class="t" style="left:545px;top:665px;font-size:11.2px;letter-spacing:0;transform:scaleX(0.8822);color:#222;">Zoom:</div>
<div class="t" style="left:582px;top:665px;font-size:11.2px;letter-spacing:0;transform:scaleX(0.8350);color:#222;">0.8</div>
<svg style="left:281px;top:110px;overflow:hidden" width="1292" height="550" viewBox="281 110 1292 550">
<defs>
<clipPath id="cS"><path d="M333.8 296.8L445.0 269.8L551.0 242.4L659.0 212.6L1056.5 371.5L1056.5 538.4L732.5 627.2L333.3 463.8Z" fill="#000" /></clipPath>
<clipPath id="cL"><rect x="300" y="200" width="432.5" height="460"/></clipPath>
<clipPath id="cR"><rect x="732.5" y="200" width="400" height="460"/></clipPath>
</defs>
<g clip-path="url(#cS)">
<g clip-path="url(#cL)">
<rect x="300" y="200" width="450" height="460" fill="#ffdc8a"/>
<path d="M735.0 494.5L735.0 640.0L330.0 640.0L330.0 359.0C336.2 363.4 350.1 374.7 367.3 385.5C384.5 396.3 414.1 412.8 433.3 424.0C452.5 435.2 464.0 443.2 482.6 452.5C501.2 461.8 530.3 473.5 545.0 480.0C559.7 486.5 564.3 489.0 570.6 491.5C576.9 494.0 578.5 492.8 582.7 495.0C586.9 497.2 592.1 503.1 596.0 505.0C599.9 506.9 602.6 507.9 606.0 506.5C609.4 505.1 610.5 500.1 616.5 496.3C622.5 492.5 633.5 487.6 642.0 483.5C650.5 479.4 661.2 476.1 667.5 472.0C673.8 467.9 674.8 459.1 680.0 458.7C685.2 458.3 692.6 464.9 699.0 469.5C705.4 474.1 712.5 481.8 718.5 486.0C724.5 490.2 732.2 493.1 735.0 494.5Z" fill="#0008f8" />
<path d="M330.0 359.0L367.3 386.0L433.3 424.4L482.6 453.0L545.0 480.5L570.6 492.0L582.0 500.0L590.0 505.0L584.6 506.8L565.5 512.9L545.0 509.0L508.2 491.4L462.9 463.8L429.4 442.0L384.0 414.5L330.0 388.5Z" fill="#c8fbff" />
<path d="M330.0 388.5L384.0 414.5L429.4 442.0L462.9 463.8L474.0 472.5L429.4 448.0L384.0 424.4L330.0 395.2Z" fill="#88cc8c" />
<path d="M338 392L384 415L429 441" fill="none" stroke="#b9a4bc" stroke-width="2"/>
<path d="M330.0 423.8L384.0 454.0L423.5 477.6L462.9 497.3L502.3 513.0L545.0 525.8L571.9 525.0L583.0 520.5L598.6 521.0L608.0 515.0L621.6 507.5L654.7 511.6L690.4 515.4L699.3 524.3L718.5 528.0L735.0 524.0L735.0 592.5L718.5 579.8L699.3 568.0L686.6 561.0L661.0 558.8L642.0 551.8L616.5 538.4L602.5 534.0L591.0 537.0L578.0 542.8L540.0 544.0L533.8 545.0L450.0 510.5L360.0 473.0L330.0 456.0Z" fill="#ff38ee" />
<path d="M330.0 395.2L384.0 424.4L429.4 448.0L474.0 472.5L508.2 492.3L540.0 513.5L547.6 518.0L554.0 523.0L553.0 526.5L545.0 525.8L502.3 513.0L462.9 497.3L423.5 477.6L384.0 454.0L330.0 423.8Z" fill="#ffb300" />
<path d="M575.7 524.3C577.0 523.4 581.2 520.8 584.6 520.5C588.0 520.2 594.1 521.5 596.0 522.4C597.9 523.2 599.2 525.0 596.0 525.6C592.8 526.2 580.4 526.2 577.0 526.0C573.6 525.8 574.4 525.2 575.7 524.3Z" fill="#ffb300" />
<path d="M621.6 521.8C622.4 520.8 623.5 519.0 629.0 519.0C634.5 519.0 645.4 520.8 654.7 521.8C664.0 522.8 680.1 524.0 685.0 525.0C689.9 526.0 685.7 526.8 684.0 528.0C682.3 529.2 683.3 532.0 675.0 532.0C666.7 532.0 642.8 529.2 634.3 528.0C625.8 526.8 626.1 526.0 624.0 525.0C621.9 524.0 620.8 522.8 621.6 521.8Z" fill="#ffb300" />
<path d="M680.0 536.5L693.0 532.6L735.0 532.0L735.0 568.0L712.0 557.0L721.0 555.0L718.5 548.0L686.6 541.6Z" fill="#ffb300" />
<path d="M726.0 590.0L735.0 585.5L735.0 593.0Z" fill="#ffb300" />
<path d="M603.0 508.0C603.8 505.6 610.0 500.4 616.5 496.3C623.0 492.2 633.5 487.6 642.0 483.5C650.5 479.4 661.2 476.1 667.5 472.0C673.8 467.9 674.8 459.1 680.0 458.7C685.2 458.3 692.6 464.9 699.0 469.5C705.4 474.1 712.5 481.8 718.5 486.0C724.5 490.2 732.2 488.3 735.0 494.5C737.8 500.7 736.3 518.9 735.0 523.0C733.7 527.1 730.1 522.6 727.4 519.0C724.6 515.4 722.1 507.7 718.5 501.4C714.9 495.1 710.0 486.3 705.7 481.0C701.5 475.7 696.8 472.4 693.0 469.5C689.2 466.6 685.8 463.2 682.8 463.8C679.8 464.4 677.5 469.7 675.0 473.0C672.5 476.3 673.0 480.2 667.5 483.5C662.0 486.8 649.6 488.7 642.0 492.5C634.4 496.3 626.6 503.4 621.6 506.5C616.6 509.6 615.1 510.8 612.0 511.0C608.9 511.2 602.2 510.4 603.0 508.0Z" fill="#88cc8c" />
<path d="M681 459L700 470L719 486" fill="none" stroke="#bfeee0" stroke-width="1.500"/>
<ellipse cx="589" cy="498.500" rx="6.500" ry="6.800" fill="#e8d83c"/>
<path d="M592.0 503.0C594.0 502.2 603.2 502.7 606.0 503.5C608.8 504.3 610.0 506.6 609.0 508.0C608.0 509.4 602.5 512.0 600.0 512.0C597.5 512.0 595.3 509.5 594.0 508.0C592.7 506.5 590.0 503.8 592.0 503.0Z" fill="#eef590" />
<path d="M597.0 502.0L604.0 501.5L608.0 504.0L600.0 505.0Z" fill="#a8a0e8" />
<ellipse cx="608.500" cy="520.500" rx="6" ry="4.200" fill="#9a8ef6"/>
<path d="M601.800 505V514" stroke="#503060" stroke-width="1.400"/><path d="M602.200 514V520" stroke="#30b0e0" stroke-width="1.400"/>
<path d="M330 358L367.300 385.500L433.300 424" fill="none" stroke="#8c8078" stroke-width="2.400"/>
<path d="M433.300 424L482.600 452.500L545 480L571 491.500" fill="none" stroke="#a67c2a" stroke-width="2.200"/>
<path d="M330.0 348.0L365.3 363.4L364.6 367.6L330.0 353.8Z" fill="#ff7fa4" />
<ellipse cx="598.600" cy="462.200" rx="2.600" ry="5.500" transform="rotate(-35 598.600 462.200)" fill="#d82000"/>
<path d="M638.0 457.5C639.0 455.6 645.2 455.9 648.0 456.5C650.8 457.1 654.4 459.3 654.7 461.0C655.0 462.7 652.1 465.3 650.0 466.5C647.9 467.7 644.0 469.5 642.0 468.0C640.0 466.5 637.0 459.4 638.0 457.5Z" fill="#f02000" />
<ellipse cx="602" cy="485.400" rx="4.200" ry="2" transform="rotate(-15 602 485.400)" fill="#ff9a9a"/>
<path d="M619.0 487.0C619.5 485.7 622.3 482.7 624.0 482.0C625.7 481.3 627.9 481.8 629.0 483.0C630.1 484.2 631.0 487.4 630.5 489.0C630.0 490.6 627.6 492.3 626.0 492.5C624.4 492.7 622.2 490.9 621.0 490.0C619.8 489.1 618.5 488.3 619.0 487.0Z" fill="#ff9098" />
<path d="M634.0 592.0C623.5 583.8 636.0 583.7 636.9 581.0C637.8 578.3 637.5 577.3 639.4 576.0C641.3 574.7 643.7 573.0 648.4 573.0C653.1 573.0 661.1 574.0 667.5 576.0C673.9 578.0 681.3 581.6 686.6 585.0C691.9 588.4 695.3 591.9 699.3 596.4C703.3 600.9 707.0 606.8 710.8 611.7C714.6 616.6 723.8 623.0 722.0 626.0C720.2 629.0 714.7 635.7 700.0 630.0C685.3 624.3 644.5 600.2 634.0 592.0Z" fill="#ff1c00" />
<path d="M590 551L597 544" stroke="#8ab8e8" stroke-width="1.800"/>
</g>
<g clip-path="url(#cR)">
<rect x="732.5" y="200" width="400" height="460" fill="#ffdc8a"/>
<path d="M730.0 497.5C734.2 472.2 747.0 492.4 755.5 488.0C764.0 483.6 772.5 476.5 781.0 471.4C789.5 466.3 798.0 461.6 806.5 457.4C815.0 453.1 823.5 449.3 832.0 445.9C840.5 442.5 849.0 440.2 857.5 437.0C866.0 433.8 874.5 429.2 883.0 426.8C891.5 424.4 900.7 423.3 908.5 422.3C916.3 421.3 924.6 419.6 930.0 421.0C935.4 422.4 938.3 428.3 940.8 430.4C943.3 432.5 945.1 431.8 944.9 433.4C944.7 435.0 940.1 437.6 939.5 440.0C938.9 442.4 938.4 445.2 941.0 447.5C943.6 449.8 952.1 451.9 955.0 453.8C957.9 455.7 956.3 456.6 958.5 459.0C960.7 461.4 964.4 464.9 968.0 468.0C971.6 471.1 975.7 475.3 980.0 477.5C984.3 479.7 988.4 479.6 993.8 481.3C999.2 483.0 1007.8 485.2 1012.6 487.5C1017.4 489.8 1020.5 492.5 1022.6 495.0C1024.7 497.5 1025.0 500.0 1025.0 502.5C1025.0 505.0 1022.8 507.1 1022.6 510.0C1022.4 512.9 1021.3 517.1 1023.8 520.0C1026.3 522.9 1033.8 525.5 1037.6 527.6C1041.4 529.7 1042.7 531.5 1046.4 532.6C1050.1 533.7 1057.7 516.1 1060.0 534.0C1062.3 551.9 1115.0 622.3 1060.0 640.0C1005.0 657.7 785.0 663.8 730.0 640.0C675.0 616.2 725.8 522.8 730.0 497.5Z" fill="#88cc8c" />
<path d="M908 422.500L930 421L941 431" fill="none" stroke="#9aa8a0" stroke-width="1.500"/>
<path d="M730.0 523.0C734.2 519.2 747.2 512.3 755.5 506.6C763.8 500.9 772.5 493.7 780.0 488.6C787.5 483.6 793.6 480.2 800.4 476.3C807.2 472.4 815.5 468.4 820.8 465.0C826.1 461.6 825.9 459.6 832.0 456.0C838.1 452.4 849.0 446.9 857.5 443.3C866.0 439.7 874.5 436.4 883.0 434.4C891.5 432.4 903.4 431.0 908.5 431.2C913.6 431.4 912.1 433.0 913.6 435.7C915.1 438.4 916.3 444.8 917.4 447.2C918.5 449.6 917.7 448.1 920.0 450.0C922.3 451.9 927.5 456.0 931.0 458.8C934.5 461.6 944.1 464.9 941.0 467.0C937.9 469.1 920.8 470.0 912.6 471.2C904.4 472.4 898.8 473.4 892.0 474.3C885.2 475.2 878.6 475.6 871.8 476.3C865.0 477.0 856.5 477.4 851.4 478.4C846.3 479.4 846.1 480.2 841.0 482.4C835.9 484.6 827.6 488.7 820.8 491.6C814.0 494.5 807.2 497.1 800.4 499.8C793.6 502.5 787.5 504.8 780.0 508.0C772.5 511.2 763.8 515.7 755.5 519.3C747.2 522.9 734.2 528.9 730.0 529.5C725.8 530.1 725.8 526.8 730.0 523.0Z" fill="#0008f8" />
<path d="M730.0 529.5C734.2 517.2 747.2 522.9 755.5 519.3C763.8 515.7 772.5 511.2 780.0 508.0C787.5 504.8 793.6 502.5 800.4 499.8C807.2 497.1 814.0 494.5 820.8 491.6C827.6 488.7 835.9 484.6 841.0 482.4C846.1 480.2 846.3 479.4 851.4 478.4C856.5 477.4 865.0 477.0 871.8 476.3C878.6 475.6 885.2 475.2 892.0 474.3C898.8 473.4 904.4 472.4 912.6 471.2C920.8 470.0 934.1 467.4 941.0 467.0C947.9 466.6 949.8 467.2 953.8 468.8C957.8 470.4 961.5 473.8 965.0 476.3C968.5 478.8 973.2 481.5 975.0 483.8C976.8 486.1 976.0 486.9 976.0 490.0C976.0 493.1 973.1 500.0 975.0 502.5C976.9 505.0 984.6 503.3 987.6 505.0C990.6 506.7 994.3 511.8 993.0 512.6C991.7 513.4 985.1 510.3 980.0 510.0C974.9 509.7 967.1 511.2 962.5 510.7C957.9 510.2 956.1 507.4 952.5 507.0C948.9 506.6 945.4 506.9 941.0 508.0C936.6 509.1 932.8 511.1 926.4 513.3C920.0 515.5 909.8 518.5 902.4 521.2C895.0 523.9 888.8 526.4 882.0 529.3C875.2 532.2 868.1 535.4 861.6 538.5C855.1 541.6 851.4 543.8 843.0 548.0C834.6 552.2 824.8 558.3 811.0 564.0C797.2 569.7 773.5 577.2 760.0 582.0C746.5 586.8 735.0 601.8 730.0 593.0C725.0 584.2 725.8 541.8 730.0 529.5Z" fill="#ff38ee" />
<path d="M730.0 593.0C735.0 580.0 746.5 586.8 760.0 582.0C773.5 577.2 797.2 569.7 811.0 564.0C824.8 558.3 834.6 552.2 843.0 548.0C851.4 543.8 855.1 541.6 861.6 538.5C868.1 535.4 875.2 532.2 882.0 529.3C888.8 526.4 895.0 523.9 902.4 521.2C909.8 518.5 920.0 515.5 926.4 513.3C932.8 511.1 936.6 509.1 941.0 508.0C945.4 506.9 948.9 506.6 952.5 507.0C956.1 507.4 957.9 510.2 962.5 510.7C967.1 511.2 974.9 509.7 980.0 510.0C985.1 510.3 989.7 510.9 993.0 512.6C996.3 514.3 995.7 516.7 1000.0 520.0C1004.3 523.3 1013.4 529.5 1018.8 532.6C1024.2 535.7 1027.7 536.6 1032.6 538.8C1037.5 541.0 1042.1 542.5 1048.0 546.0C1053.9 549.5 1064.7 541.0 1068.0 560.0C1071.3 579.0 1124.3 643.3 1068.0 660.0C1011.7 676.7 786.3 671.2 730.0 660.0C673.7 648.8 725.0 606.0 730.0 593.0Z" fill="#0008f8" />
<path d="M730.0 538.0C734.2 531.5 747.2 531.4 755.5 528.2C763.8 525.0 772.5 521.9 780.0 519.0C787.5 516.1 793.6 513.7 800.4 511.0C807.2 508.3 814.0 505.4 820.8 502.8C827.6 500.2 834.4 497.9 841.2 495.7C848.0 493.5 854.8 491.6 861.6 489.6C868.4 487.6 875.2 485.1 882.0 483.5C888.8 481.9 895.6 480.8 902.4 479.9C909.2 479.0 914.9 478.7 922.8 478.4C930.7 478.1 945.0 477.6 950.0 478.0C955.0 478.4 953.0 479.7 953.0 480.7C953.0 481.7 955.0 483.2 950.0 483.8C945.0 484.4 930.7 483.4 922.8 484.0C914.9 484.6 909.2 485.9 902.4 487.5C895.6 489.1 888.0 491.5 882.0 493.7C876.0 495.9 871.8 497.9 866.7 500.8C861.6 503.7 856.2 506.7 851.4 511.0C846.6 515.3 841.4 523.4 838.0 526.8C834.6 530.2 833.9 529.6 831.0 531.4C828.1 533.2 826.0 535.2 820.8 537.5C815.6 539.8 806.6 542.8 800.0 545.0C793.4 547.2 788.4 548.3 781.0 551.0C773.6 553.7 764.0 558.7 755.5 561.4C747.0 564.1 734.2 570.9 730.0 567.0C725.8 563.1 725.8 544.5 730.0 538.0Z" fill="#ffb300" />
<path d="M792.0 535.8L806.5 528.4L838.0 526.6L819.2 534.6L801.4 537.4Z" fill="#ff38ee" />
<path d="M730.0 584.0L755.5 577.5L781.0 568.0L806.5 558.0L832.0 547.0L857.5 536.5L882.0 526.3L902.4 518.5L926.4 511.6L941.0 507.0L941.0 508.0L926.4 513.3L902.4 521.2L882.0 529.3L861.6 538.5L843.0 548.0L811.0 564.0L760.0 582.0L730.0 593.0Z" fill="#ffb300" />
<path d="M885 503.500L897 500.500" stroke="#ff8ad8" stroke-width="1.200"/>
<path d="M942.5 450.0C942.8 449.1 945.4 447.8 947.0 447.5C948.6 447.2 951.3 447.7 952.0 448.5C952.7 449.3 952.2 451.8 951.0 452.5C949.8 453.2 946.4 453.4 945.0 453.0C943.6 452.6 942.2 450.9 942.5 450.0Z" fill="#e02000" />
<path d="M958.8 453.8C958.9 452.0 964.7 450.1 968.0 449.0C971.3 447.9 977.0 446.5 978.8 447.5C980.6 448.5 979.2 453.1 979.0 455.0C978.8 456.9 979.4 458.0 977.5 458.8C975.6 459.6 970.6 460.8 967.5 460.0C964.4 459.2 958.7 455.6 958.8 453.8Z" fill="#ff9494" />
<path d="M955.0 460.0C956.2 458.3 959.5 457.7 962.0 457.5C964.5 457.3 967.7 457.1 970.0 458.8C972.3 460.6 974.3 464.9 976.0 468.0C977.7 471.1 980.2 475.1 980.0 477.5C979.8 479.9 977.5 482.9 975.0 482.5C972.5 482.1 968.3 477.5 965.0 475.0C961.7 472.5 956.7 470.0 955.0 467.5C953.3 465.0 953.8 461.7 955.0 460.0Z" fill="#c8fbff" />
<path d="M957.5 496.3C957.9 494.8 966.9 491.5 970.0 490.0C973.1 488.5 975.2 486.7 976.0 487.5C976.8 488.3 976.4 493.1 975.0 495.0C973.6 496.9 970.4 498.6 967.5 498.8C964.6 499.0 957.1 497.8 957.5 496.3Z" fill="#e8fff4" />
<path d="M962.5 498.0L975.0 498.5L975.0 501.0L963.0 500.5Z" fill="#d8c040" />
<path d="M952.5 506.3C952.8 505.0 960.2 503.6 964.0 503.0C967.8 502.4 973.0 501.5 975.0 502.5C977.0 503.5 978.1 507.4 976.0 508.8C973.9 510.2 966.4 511.1 962.5 510.7C958.6 510.3 952.2 507.6 952.5 506.3Z" fill="#e0fcf8" />
<path d="M975.0 502.5L987.6 505.0L993.0 512.6L980.0 510.0Z" fill="#ff38ee" />
<path d="M976.3 483.8C978.0 481.8 981.0 481.5 985.0 481.9C989.0 482.3 995.4 484.3 1000.0 486.3C1004.6 488.3 1009.6 491.3 1012.6 493.8C1015.6 496.3 1017.6 499.3 1018.2 501.3C1018.8 503.3 1018.3 504.8 1016.3 505.7C1014.3 506.6 1010.2 507.2 1006.3 506.9C1002.3 506.6 997.0 505.1 992.6 503.8C988.2 502.5 982.9 500.5 980.0 498.8C977.1 497.1 975.6 496.3 975.0 493.8C974.4 491.3 974.6 485.8 976.3 483.8Z" fill="#0008f8" />
<path d="M984 480L1002.600 484.500L1022.600 493.500L1031 505" fill="none" stroke="#e6c0e6" stroke-width="2"/>
<path d="M995.0 462.5C993.2 458.4 996.2 454.3 997.0 452.0C997.8 449.7 996.8 449.5 1000.0 448.8C1003.2 448.1 1011.3 446.8 1016.3 448.0C1021.3 449.2 1026.5 452.2 1030.0 456.3C1033.5 460.4 1036.5 467.3 1037.6 472.5C1038.7 477.7 1038.3 484.8 1036.4 487.5C1034.5 490.2 1030.3 489.8 1026.3 488.8C1022.3 487.8 1015.7 483.4 1012.6 481.3C1009.5 479.2 1010.5 479.4 1007.6 476.3C1004.7 473.2 996.8 466.6 995.0 462.5Z" fill="#ff8c96" />
<path d="M1020.0 486.0C1021.0 485.0 1027.3 485.7 1030.0 488.0C1032.7 490.3 1036.0 497.5 1036.0 500.0C1036.0 502.5 1032.0 504.0 1030.0 503.0C1028.0 502.0 1025.7 496.8 1024.0 494.0C1022.3 491.2 1019.0 487.0 1020.0 486.0Z" fill="#ff8c96" />
<path d="M1022.6 502.5C1025.5 501.6 1037.1 503.5 1040.0 505.0C1042.9 506.5 1042.9 510.4 1040.0 511.3C1037.1 512.2 1025.5 512.0 1022.6 510.5C1019.7 509.0 1019.7 503.4 1022.6 502.5Z" fill="#ff98e8" />
<path d="M1022.6 511.3C1024.3 510.7 1031.2 511.5 1033.9 513.8C1036.6 516.1 1039.6 523.5 1038.9 525.0C1038.2 526.5 1032.5 523.8 1030.0 522.6C1027.5 521.4 1025.0 519.5 1023.8 517.6C1022.6 515.7 1020.9 511.9 1022.6 511.3Z" fill="#ff8c9a" />
<path d="M1031.0 512.0L1040.0 512.0L1038.0 522.0Z" fill="#ffc890" />
<path d="M1040.0 500.7L1057.0 500.0L1057.0 507.5L1043.9 508.2Z" fill="#b0802c" />
<path d="M1045.0 507.5L1057.0 507.5L1057.0 512.5L1047.6 511.3Z" fill="#0008f8" />
<path d="M1040.0 511.3L1047.6 510.7L1046.4 522.6L1038.9 522.6Z" fill="#c4d040" />
<path d="M1047.6 513.8C1049.5 512.3 1055.4 509.5 1057.0 512.6C1058.6 515.7 1058.6 529.3 1057.0 532.6C1055.4 535.9 1049.5 534.5 1047.6 532.6C1045.7 530.7 1045.7 524.4 1045.7 521.3C1045.7 518.2 1045.7 515.2 1047.6 513.8Z" fill="#ff38ee" />
<path d="M1038.9 523.2L1045.7 523.2L1045.0 528.8L1038.9 527.6Z" fill="#0008f8" />
<path d="M1041.4 538.8L1057.0 532.8L1057.0 540.0L1042.6 541.5Z" fill="#dffcf4" />
<path d="M916.0 538.2C916.0 535.9 916.5 532.6 918.2 530.0C919.9 527.4 922.7 524.5 926.4 522.6C930.1 520.7 935.5 519.0 940.3 518.5C945.1 518.0 950.3 518.3 955.3 519.7C960.3 521.1 965.6 524.2 970.4 526.7C975.2 529.2 979.1 531.9 984.3 534.8C989.5 537.7 996.4 541.3 1001.7 544.0C1007.0 546.7 1018.0 547.5 1016.0 551.0C1014.0 554.5 1000.5 562.2 990.0 565.0C979.5 567.8 961.7 569.6 953.0 568.0C944.3 566.4 942.4 559.0 938.0 555.6C933.6 552.2 929.7 549.4 926.4 547.5C923.1 545.6 919.9 545.5 918.2 544.0C916.5 542.5 916.0 540.5 916.0 538.2Z" fill="#ff1c00" />
</g>
<path d="M333.0 297.0L445.0 269.0L551.0 242.0L659.0 211.0L1058.0 371.0L1058.0 405.0C1053.8 406.0 1040.3 408.8 1032.6 411.0C1024.9 413.2 1020.5 416.7 1012.0 418.0C1003.5 419.3 992.8 416.2 981.6 418.6C970.4 421.0 952.2 430.8 944.9 432.4C937.6 434.0 940.5 429.9 938.0 428.0C935.5 426.1 932.8 423.2 930.0 421.0C927.2 418.8 924.6 415.5 921.0 414.7C917.4 413.9 914.8 415.9 908.5 416.0C902.2 416.1 891.5 415.9 883.0 415.3C874.5 414.8 866.0 413.2 857.5 412.7C849.0 412.1 841.6 411.8 832.0 412.0C822.4 412.2 808.5 412.8 800.0 414.0C791.5 415.2 787.4 416.9 781.0 419.0C774.6 421.1 768.3 423.2 761.9 426.8C755.5 430.4 747.6 436.8 742.7 440.8C737.8 444.8 735.0 448.2 732.5 451.0C730.0 453.8 731.9 457.3 727.4 457.4C722.9 457.5 712.5 454.1 705.7 451.7C698.9 449.2 692.4 444.8 686.6 442.7C680.8 440.6 674.2 437.9 671.0 439.0C667.8 440.1 669.4 446.7 667.5 449.0C665.6 451.3 663.6 452.2 659.8 453.0C656.0 453.8 648.8 454.5 644.5 453.6C640.2 452.7 637.3 450.5 634.3 447.8C631.3 445.1 629.2 440.6 626.7 437.6C624.2 434.6 621.3 432.9 619.0 430.0C616.7 427.1 618.2 423.9 613.0 420.0C607.8 416.1 599.3 411.5 588.0 406.5C576.7 401.5 558.7 395.6 545.0 389.9C531.3 384.2 517.0 377.4 505.8 372.5C494.6 367.6 487.3 364.8 478.0 360.7C468.7 356.6 459.3 352.3 450.0 348.0C440.7 343.7 431.1 339.2 422.3 335.0C413.5 330.8 404.2 326.2 397.3 323.0C390.4 319.8 385.7 318.7 380.6 316.0C375.5 313.3 371.3 309.5 366.7 307.0C362.1 304.5 358.4 302.6 352.8 300.9C347.2 299.2 336.3 297.6 333.0 297.0Z" fill="#ff3000" />
<path d="M626.0 435.0L650.0 440.0L661.0 444.0L667.5 449.0L659.8 453.0L644.5 453.6L634.3 447.8Z" fill="#f82000" />
<path d="M659.8 433.8L670.0 439.0L671.3 450.4L667.5 446.6L661.0 442.7Z" fill="#a8d888" />
<path d="M920.4 415.0L971.4 389.6L1017.3 389.6L981.6 417.0L944.9 432.4Z" fill="#ff4a00" />
<path d="M1020.0 390.6L989.7 404.9L981.6 418.6L1012.0 418.0L1032.6 411.0L1058.0 405.0L1058.0 392.6L1042.8 394.7L1030.5 393.7Z" fill="#ea1a00" />
<path d="M1022.4 389.6C1022.8 387.9 1028.5 385.6 1032.6 383.5C1036.7 381.4 1043.9 379.3 1046.8 377.3C1049.7 375.3 1048.1 372.4 1050.0 371.5C1051.9 370.6 1056.7 368.5 1058.0 372.0C1059.3 375.5 1060.5 388.8 1058.0 392.6C1055.5 396.4 1047.4 394.5 1042.8 394.7C1038.2 394.9 1033.9 394.5 1030.5 393.7C1027.1 392.9 1022.0 391.3 1022.4 389.6Z" fill="#ffdc8a" />
<path d="M549.5 241.5L658.8 210.0L681.5 219.5L666.5 217.0L647.0 216.8L637.9 219.7L636.9 223.8L641.0 229.9L646.0 238.0L651.2 243.0L651.7 249.2L642.0 251.3L628.7 254.3L611.4 255.9L588.0 256.4L580.8 252.3L570.6 247.2L560.4 244.7Z" fill="#ffdc8a" />
<path d="M998.0 420.5Z" fill="none" />
<ellipse cx="998" cy="420.500" rx="12" ry="6" transform="rotate(-40 998 420.500)" fill="#ff82a0"/>
</g>
<g fill="none" stroke-width="1">
<path d="M332.700 282L607 208.400" stroke="#1f8a2a"/><path d="M607 208.400L657 195" stroke="#9a1414"/>
<path d="M657 195L1057.500 359.500V539M332.700 282V463.500L732.500 627L1057.500 539" stroke="#b01010"/>
<path d="M332.700 282L353 293M1057.500 359.500L1035 368" stroke="#8a1010"/><path d="M657.500 195V212" stroke="#c02020" stroke-dasharray="1.500 1"/>
<path d="M732.500 456V627" stroke="#ff5a30" stroke-width="1.200"/>
<path d="M741.500 443.300L855 414" stroke="#c85a10" stroke-width=".9"/>
</g>
<path d="M972.300 444.500L971.500 470" stroke="#3a3038" stroke-width="1.800"/><path d="M971.500 470L970.800 492" stroke="#1e90d8" stroke-width="1.800"/><path d="M970.800 492L970.200 510" stroke="#8a3090" stroke-width="1.800"/><path d="M970.200 510L969.500 523" stroke="#20a0d8" stroke-width="1.800"/>
<path d="M714.800 622V637" stroke="#8a3ad8" stroke-width="1.600"/><path d="M744 625V658" stroke="#8a3ad8" stroke-width="1.600"/>
<path d="M408.5 310v5M428.0 321v7M446.5 292v6M446.5 305v6M446.5 315v4M446.5 326v4M464.0 287v6M464.0 328v5M483.5 264v6M483.5 297v4M483.5 307v5M483.5 329v6M483.5 351v7M502.0 260v4M502.0 271v5M502.0 279v6M502.0 292v4M502.0 324v5M502.0 335v6M502.0 346v5M521.5 268v5M521.5 277v5M521.5 288v4M521.5 296v6M521.5 306v6M521.5 317v6M521.5 329v7M521.5 342v7M521.5 366v4M539.0 249v4M539.0 266v4M539.0 275v5M539.0 283v5M539.0 292v7M539.0 305v5M539.0 328v5M539.0 339v5M539.0 347v7M539.0 359v5M556.5 248v6M556.5 272v4M556.5 280v7M556.5 290v5M556.5 302v5M556.5 331v4M556.5 339v6M575.0 251v6M575.0 263v5M575.0 274v5M575.0 303v5M575.0 323v4M575.0 333v5M575.0 375v4M592.5 277v5M592.5 297v6M592.5 306v6M592.5 318v5M592.5 328v5M592.5 339v6M592.5 349v5M592.5 359v6M592.5 369v5M592.5 377v6M592.5 387v6M592.5 398v5M612.0 268v5M612.0 277v7M612.0 297v4M612.0 307v4M612.0 325v5M612.0 334v6M612.0 346v5M612.0 358v5M612.0 368v5M612.0 379v5M612.0 399v4M612.0 410v6M630.5 270v6M630.5 290v4M630.5 301v7M630.5 323v4M630.5 354v5M630.5 378v7M630.5 404v6M630.5 414v4M630.5 423v6M630.5 432v6M648.0 223v7M648.0 258v5M648.0 281v6M648.0 292v6M648.0 325v6M648.0 366v4M648.0 386v5M648.0 395v7M648.0 419v6M666.5 219v5M666.5 228v5M666.5 237v6M666.5 247v6M666.5 255v6M666.5 267v5M666.5 303v5M666.5 314v6M666.5 327v5M666.5 338v6M666.5 349v6M666.5 359v6M666.5 370v6M666.5 381v5M666.5 403v6M666.5 415v7M666.5 433v5M685.0 238v5M685.0 258v5M685.0 279v7M685.0 303v6M685.0 315v5M685.0 325v6M685.0 357v5M685.0 376v7M685.0 388v4M685.0 396v6M685.0 408v5M704.5 243v6M704.5 265v6M704.5 275v6M704.5 287v6M704.5 296v4M704.5 306v5M704.5 314v7M704.5 327v5M704.5 345v5M704.5 356v5M704.5 376v5M704.5 388v4M704.5 399v4M704.5 415v5M704.5 434v6M723.0 258v7M723.0 272v5M723.0 292v5M723.0 303v5M723.0 313v5M723.0 352v4M723.0 362v4M723.0 382v7M723.0 395v6M723.0 406v5M723.0 414v5M723.0 425v6M723.0 447v5M741.5 249v7M741.5 259v6M741.5 269v6M741.5 280v7M741.5 291v7M741.5 302v6M741.5 315v6M741.5 350v5M741.5 369v4M741.5 389v5M741.5 397v6M741.5 407v6M741.5 416v5M760.0 259v7M760.0 305v6M760.0 317v6M760.0 327v5M760.0 335v4M760.0 364v4M760.0 383v6M778.5 268v6M778.5 281v7M778.5 303v6M778.5 314v6M778.5 357v6M778.5 367v4M778.5 377v4M778.5 387v4M778.5 397v7M778.5 408v6M796.0 296v7M796.0 308v6M796.0 317v6M796.0 337v6M796.0 350v5M796.0 371v6M796.0 380v5M796.0 390v5M815.5 277v6M815.5 298v6M815.5 308v6M815.5 317v6M815.5 328v7M815.5 342v6M815.5 364v7M815.5 389v6M835.0 286v5M835.0 297v5M835.0 308v6M835.0 363v6M835.0 382v4M835.0 402v4M854.5 296v5M854.5 323v4M854.5 346v4M854.5 365v5M854.5 374v5M854.5 395v7M874.0 301v6M874.0 311v5M874.0 321v6M874.0 330v7M874.0 342v5M874.0 354v5M874.0 375v6M874.0 398v4M892.5 319v6M892.5 340v7M892.5 350v5M892.5 359v7M892.5 383v4M892.5 392v5M892.5 400v4M912.0 332v5M912.0 341v7M912.0 374v6M912.0 384v6M912.0 394v5M929.5 322v5M929.5 344v5M929.5 353v7M929.5 385v5M929.5 395v5M948.0 346v4M948.0 371v6M948.0 380v6M948.0 392v4M948.0 421v5M966.5 337v6M966.5 366v4M966.5 377v5M966.5 386v6M966.5 395v5M985.0 392v5M985.0 402v6M1004.5 351v5M1004.5 371v5M1004.5 380v7M1004.5 394v7M1004.5 407v5M1024.0 367v5M1043.5 390v7M690.5 375v7M690.5 386v6M690.5 397v7M696.5 377v5M696.5 386v7M696.5 397v9M703.5 375v9M703.5 387v8M703.5 397v7M710.5 378v6M710.5 386v5M710.5 396v9M715.5 375v5M715.5 384v8M715.5 396v8M720.5 376v7M720.5 388v6M720.5 397v5M726.5 376v6M726.5 386v9M726.5 399v8M733.5 375v7M733.5 386v6M733.5 397v7M739.5 375v6M739.5 385v7M739.5 397v8M746.5 377v9M746.5 389v8M746.5 400v8M753.5 375v6M753.5 384v5M753.5 394v7M759.5 377v6M759.5 385v7M759.5 394v9M764.5 377v7M764.5 388v8M764.5 400v6M771.5 373v5M771.5 382v8M771.5 392v8M777.5 373v8M777.5 384v6M777.5 394v6M784.5 375v7M784.5 385v7M784.5 394v7M789.5 374v6M789.5 384v5M789.5 393v6M796.5 373v6M796.5 381v8M796.5 392v7" stroke="#7c9c1c" stroke-width="1" fill="none" opacity=".85"/>
<path d="M405.5 315.5h6.500M425.0 328.5h6.500M443.5 298.5h6.500M480.5 312.5h6.500M480.5 335.5h6.500M499.0 329.5h6.500M518.5 282.5h6.500M518.5 292.5h6.500M518.5 312.5h6.500M536.0 299.5h6.500M536.0 364.5h6.500M553.5 296.5h6.500M553.5 335.5h6.500M572.0 278.5h6.500M572.0 308.5h6.500M589.5 323.5h6.500M589.5 346.5h6.500M609.0 311.5h6.500M609.0 330.5h6.500M609.0 416.5h6.500M627.5 275.5h6.500M627.5 360.5h6.500M627.5 409.5h6.500M627.5 418.5h6.500M645.0 425.5h6.500M663.5 232.5h6.500M663.5 354.5h6.500M663.5 365.5h6.500M682.0 285.5h6.500M682.0 321.5h6.500M682.0 331.5h6.500M682.0 392.5h6.500M682.0 402.5h6.500M701.5 281.5h6.500M701.5 350.5h6.500M701.5 361.5h6.500M701.5 381.5h6.500M701.5 440.5h6.500M720.0 276.5h6.500M720.0 388.5h6.500M720.0 410.5h6.500M738.5 321.5h6.500M738.5 404.5h6.500M738.5 412.5h6.500M757.0 311.5h6.500M757.0 323.5h6.500M757.0 332.5h6.500M775.5 287.5h6.500M775.5 309.5h6.500M775.5 320.5h6.500M775.5 391.5h6.500M775.5 404.5h6.500M775.5 414.5h6.500M793.0 343.5h6.500M793.0 377.5h6.500M793.0 385.5h6.500M812.5 371.5h6.500M832.0 292.5h6.500M832.0 303.5h6.500M832.0 369.5h6.500M832.0 386.5h6.500M851.5 351.5h6.500M851.5 379.5h6.500M871.0 316.5h6.500M871.0 359.5h6.500M871.0 381.5h6.500M871.0 402.5h6.500M889.5 387.5h6.500M889.5 396.5h6.500M889.5 404.5h6.500M909.0 348.5h6.500M926.5 327.5h6.500M926.5 349.5h6.500M926.5 400.5h6.500M945.0 351.5h6.500M945.0 397.5h6.500M945.0 426.5h6.500M982.0 397.5h6.500M687.5 381.5h6.500M687.5 404.5h6.500M700.5 395.5h6.500M700.5 405.5h6.500M707.5 391.5h6.500M707.5 405.5h6.500M712.5 404.5h6.500M717.5 384.5h6.500M717.5 393.5h6.500M717.5 402.5h6.500M723.5 382.5h6.500M723.5 407.5h6.500M730.5 382.5h6.500M730.5 403.5h6.500M736.5 380.5h6.500M736.5 393.5h6.500M750.5 381.5h6.500M750.5 401.5h6.500M756.5 403.5h6.500M768.5 400.5h6.500M781.5 382.5h6.500M781.5 392.5h6.500M781.5 401.5h6.500M786.5 380.5h6.500M786.5 389.5h6.500M786.5 399.5h6.500M793.5 379.5h6.500" stroke="#86a428" stroke-width="1" fill="none" opacity=".8"/>
<path d="M843.500 277V288M839 283.500H848M987.500 335V345M983 340.500H992" stroke="#1890c0" stroke-width="1" fill="none"/>
<g font-family="Liberation Mono,monospace" font-size="10.500" fill="#3858c8" opacity=".85"><text x="696" y="338" textLength="44">[Level]</text><text x="693" y="362" textLength="34">North</text><text x="736.500" y="376" textLength="23">East</text></g>
<path d="M694.500 341V375.500H731" fill="none" stroke="#2c58d8" stroke-width="1.200"/><path d="M694.500 339l-2 5h4zM733.500 375.500l-5-2v4z" fill="#2c58d8"/>
<g font-family="Liberation Sans,sans-serif" font-weight="bold" font-size="13" fill="#000" opacity=".07"><text x="748" y="489" textLength="84">ENGESOIAJK</text></g>
<path d="M809 514l3-1l8 6l1 4l-4 2l-4-2l-4-6z" fill="#fff" stroke="#555" stroke-width=".7"/>
</svg>
</body></html>
